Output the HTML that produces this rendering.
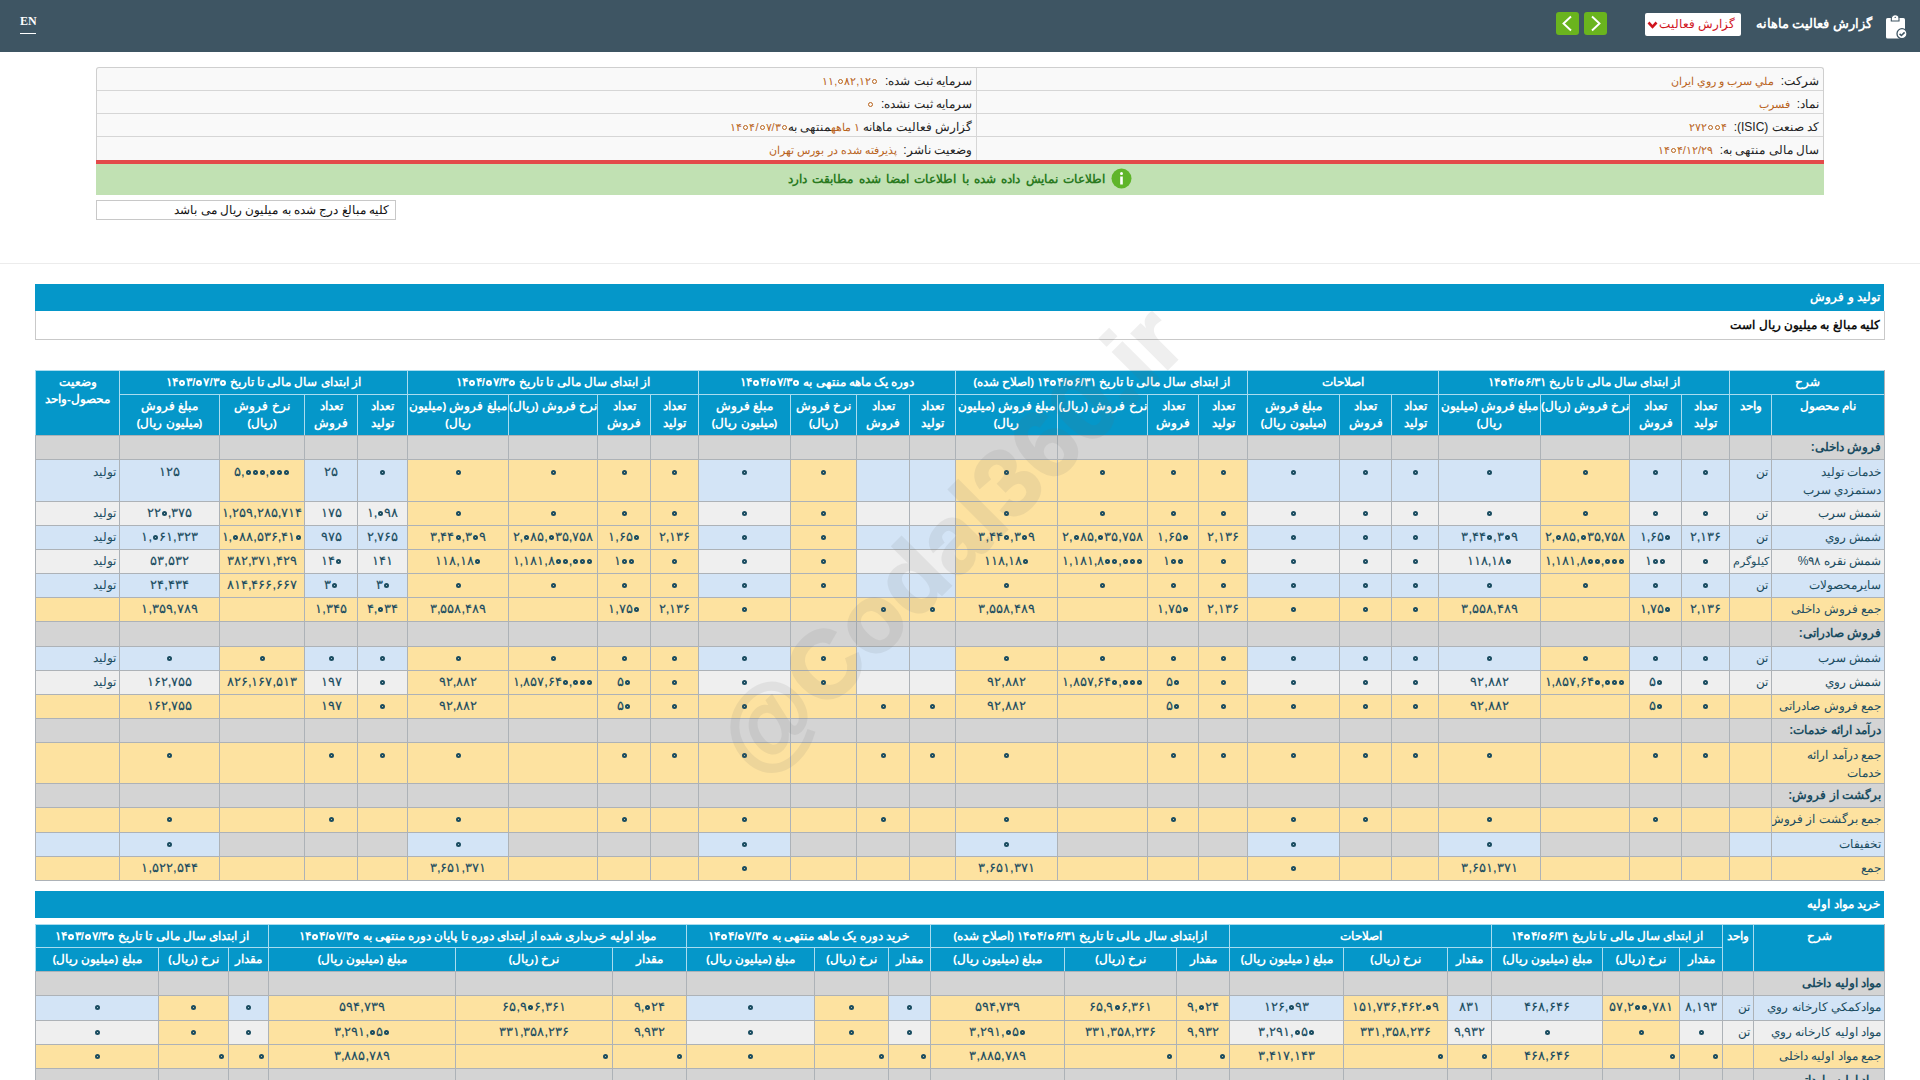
<!DOCTYPE html>
<html lang="fa" dir="rtl">
<head>
<meta charset="utf-8">
<title>گزارش فعالیت ماهانه</title>
<style>
*{box-sizing:border-box;margin:0;padding:0}
html,body{width:1920px;height:1080px;overflow:hidden;background:#fff}
body{position:relative;font-family:"Liberation Sans",sans-serif;color:#222}
.abs{position:absolute}
#top{left:0;top:0;width:1920px;height:52px;background:#3e5563}
#en{left:20px;top:13.5px;font-family:"Liberation Serif",serif;font-size:12px;font-weight:bold;color:#fff;line-height:14px;direction:ltr}
#enu{left:20px;top:33px;width:16px;height:1.3px;background:#fff}
#ttl{right:48px;top:13px;font-size:13px;font-weight:bold;color:#fff;line-height:22px;white-space:nowrap}
#dd{left:1645px;top:13px;width:96px;height:23px;background:#fff;border-radius:2px}
#ddt{right:6px;top:3px;font-size:11.5px;color:#d0141d;line-height:16px;white-space:nowrap}
#gb1,#gb2{top:12px;width:23px;height:23px;background:#6ab41e;border-radius:3px}
#gb1{left:1556px}#gb2{left:1584px}
#info{left:96px;top:67px;width:1728px;height:128px;background:#f9f9f9;border:1px solid #cfcfcf;border-bottom:none;border-radius:3px 3px 0 0;overflow:hidden}
.ir{position:absolute;height:23px;border-bottom:1px solid #d6d6d6;font-size:12px;line-height:22px;white-space:nowrap;padding-top:2px}
.ir .k{color:#222}.ir .v{color:#b8621a;font-size:11px}
#red{left:96px;top:160px;width:1728px;height:4px;background:#e34a4a}
#grn{left:96px;top:164px;width:1728px;height:31px;background:#c1e1b3;text-align:center;font-size:12px;word-spacing:2px;color:#2a7a1f;line-height:30px;font-weight:bold}
#note{left:96px;top:200px;width:300px;height:20px;border:1px solid #c8c8c8;font-size:12px;line-height:18px;padding-right:6px;text-align:right;color:#111}
#sep{left:0;top:263px;width:1920px;height:1px;background:#ececec}
.sec{left:35px;width:1849px;height:27px;background:#0597c9;color:#fff;font-weight:bold;font-size:12px;line-height:27px;padding-right:4px}
#sub{left:35px;top:311px;width:1850px;height:29px;border:1px solid #c9c9c9;border-top:none;font-weight:bold;font-size:12px;line-height:28px;padding-right:4px;color:#111}
.c{position:absolute;border-style:solid;border-width:1px 0 0 1px;font-size:12px;color:#1a4c60;line-height:23px;text-align:center;white-space:nowrap;overflow:hidden}
.h{color:#fff;font-weight:bold;font-size:11.5px;line-height:23px;letter-spacing:-0.15px}
.h2{line-height:17px;padding-top:3px}
.top{}
.b.top{line-height:18px;padding-top:3px}
.cat{font-weight:bold}
.dt{direction:ltr;unicode-bidi:isolate;display:inline-block}
.sm{font-size:11px;overflow:visible;padding-right:2px!important}
.n{font-size:13px;font-weight:normal;-webkit-text-stroke:0.15px #1a4c60;direction:ltr;line-height:22px}
.z{display:inline-block;width:5px;height:5px;border:2px solid currentColor;border-radius:50%;margin:0 1px;vertical-align:1px}
.zh{width:6px;height:6px;border-width:2px;vertical-align:0;margin:0 1px}
.zi{width:5px;height:5px;border-width:1.5px;vertical-align:1px;margin:0 1px}
.name{}
#t1{left:0;top:0}
#t1r{left:35px;top:370px;width:1850px;height:511px;border-right:1px solid #adb2b7;border-bottom:1px solid #adb2b7;pointer-events:none}
#t2r{left:35px;top:924px;width:1850px;height:200px;border-right:1px solid #adb2b7;pointer-events:none}
#wm{left:550px;top:490px;width:800px;text-align:center;font-size:96px;font-weight:bold;color:#6a6a6a;-webkit-text-stroke:2px #6a6a6a;opacity:0.1;transform:rotate(-45deg);direction:ltr;white-space:nowrap;pointer-events:none;line-height:100px}
</style>
</head>
<body>
<div id="top" class="abs"></div>
<div id="en" class="abs">EN</div>
<div id="enu" class="abs"></div>
<svg class="abs" style="left:1882px;top:12px" width="28" height="30" viewBox="0 0 28 30">
  <rect x="4" y="6" width="19" height="20.5" rx="1.6" fill="#fff"/>
  <path d="M9.3 9 L9.3 6.5 A3.85 3.85 0 0 1 17 6.5 L17 9 Z" fill="#fff" stroke="#3e5563" stroke-width="1.1"/>
  <path d="M12.3 6 L13.2 4.6 L14.1 6 Z" fill="#3e5563"/>
  <circle cx="20" cy="21.7" r="5" fill="#fff" stroke="#3e5563" stroke-width="1.3"/>
  <path d="M17.6 21.9 L19.4 23.5 L22.6 20.4" fill="none" stroke="#3e5563" stroke-width="1.6"/>
</svg>
<div id="ttl" class="abs">گزارش فعالیت ماهانه</div>
<div id="dd" class="abs"><div id="ddt" class="abs">گزارش فعالیت</div>
<svg class="abs" style="left:2px;top:8px" width="11" height="8" viewBox="0 0 11 8"><path d="M1.5 1.5 L5.5 5.8 L9.5 1.5" fill="none" stroke="#d0141d" stroke-width="2.6"/></svg></div>
<div id="gb1" class="abs"><svg width="23" height="23" viewBox="0 0 23 23"><path d="M15 4.5 L7.5 11.5 L15 18.5" fill="none" stroke="#fff" stroke-width="1.9"/></svg></div>
<div id="gb2" class="abs"><svg width="23" height="23" viewBox="0 0 23 23"><path d="M8 4.5 L15.5 11.5 L8 18.5" fill="none" stroke="#fff" stroke-width="1.9"/></svg></div>

<div id="info" class="abs">
  <div class="ir" style="right:0;top:0;width:847px;"><span style="position:absolute;right:4px"><span class="k">شرکت:</span>&nbsp; <span class="v">ملي سرب و روي ايران</span></span></div>
  <div class="ir" style="right:0;top:23px;width:847px;"><span style="position:absolute;right:4px"><span class="k">نماد:</span>&nbsp; <span class="v">فسرب</span></span></div>
  <div class="ir" style="right:0;top:46px;width:847px;"><span style="position:absolute;right:4px"><span class="k">کد صنعت (ISIC):</span>&nbsp; <span class="v dt">۲۷۲<i class="z zi"></i><i class="z zi"></i>۴</span></span></div>
  <div class="ir" style="right:0;top:69px;width:847px;border-bottom:none"><span style="position:absolute;right:4px"><span class="k">سال مالی منتهی به:</span>&nbsp; <span class="v dt">۱۴<i class="z zi"></i>۴/۱۲/۲۹</span></span></div>
  <div class="ir" style="left:0;top:0;width:880px;border-right:1px solid #d6d6d6"><span style="position:absolute;right:4px"><span class="k">سرمایه ثبت شده:</span>&nbsp; <span class="v dt">۱۱,<i class="z zi"></i>۸۲,۱۲<i class="z zi"></i></span></span></div>
  <div class="ir" style="left:0;top:23px;width:880px;border-right:1px solid #d6d6d6"><span style="position:absolute;right:4px"><span class="k">سرمایه ثبت نشده:</span>&nbsp; <span class="v dt"><i class="z zi"></i></span></span></div>
  <div class="ir" style="left:0;top:46px;width:880px;border-right:1px solid #d6d6d6"><span style="position:absolute;right:4px"><span class="k">گزارش فعالیت ماهانه</span> <span class="v">۱ ماهه</span><span class="k">منتهی به</span><span class="v dt">۱۴<i class="z zi"></i>۴/<i class="z zi"></i>۷/۳<i class="z zi"></i></span></span></div>
  <div class="ir" style="left:0;top:69px;width:880px;border-right:1px solid #d6d6d6;border-bottom:none"><span style="position:absolute;right:4px"><span class="k">وضعیت ناشر:</span>&nbsp; <span class="v">پذیرفته شده در بورس تهران</span></span></div>
</div>
<div id="red" class="abs"></div>
<div id="grn" class="abs"><svg style="vertical-align:middle;margin-left:6px;position:relative;top:-1px" width="21" height="21" viewBox="0 0 21 21"><circle cx="10.5" cy="10.5" r="10" fill="#5fb52a"/><rect x="9.2" y="8.5" width="2.6" height="8" fill="#fff"/><circle cx="10.5" cy="5.6" r="1.5" fill="#fff"/></svg><span>اطلاعات نمایش داده شده با اطلاعات امضا شده مطابقت دارد</span></div>
<div id="note" class="abs">کلیه مبالغ درج شده به میلیون ریال می باشد</div>
<div id="sep" class="abs"></div>

<div class="sec abs" style="top:284px">تولید و فروش</div>
<div id="sub" class="abs">کلیه مبالغ به میلیون ریال است</div>

<div class="c h" style="left:1729px;top:370px;width:155px;height:24px;background:#0597c9;border-color:#a9dcef;">شرح</div>
<div class="c h" style="left:1438px;top:370px;width:291px;height:24px;background:#0597c9;border-color:#a9dcef;">از ابتدای سال مالی تا تاریخ <span class="dt">۱۴<i class="z zh"></i>۴/<i class="z zh"></i>۶/۳۱</span></div>
<div class="c h" style="left:1247px;top:370px;width:191px;height:24px;background:#0597c9;border-color:#a9dcef;">اصلاحات</div>
<div class="c h" style="left:955px;top:370px;width:292px;height:24px;background:#0597c9;border-color:#a9dcef;">از ابتدای سال مالی تا تاریخ <span class="dt">۱۴<i class="z zh"></i>۴/<i class="z zh"></i>۶/۳۱</span> (اصلاح شده)</div>
<div class="c h" style="left:698px;top:370px;width:257px;height:24px;background:#0597c9;border-color:#a9dcef;">دوره یک ماهه منتهی به <span class="dt">۱۴<i class="z zh"></i>۴/<i class="z zh"></i>۷/۳<i class="z zh"></i></span></div>
<div class="c h" style="left:407px;top:370px;width:291px;height:24px;background:#0597c9;border-color:#a9dcef;">از ابتدای سال مالی تا تاریخ <span class="dt">۱۴<i class="z zh"></i>۴/<i class="z zh"></i>۷/۳<i class="z zh"></i></span></div>
<div class="c h" style="left:119px;top:370px;width:288px;height:24px;background:#0597c9;border-color:#a9dcef;">از ابتدای سال مالی تا تاریخ <span class="dt">۱۴<i class="z zh"></i>۳/<i class="z zh"></i>۷/۳<i class="z zh"></i></span></div>
<div class="c h h2 top" style="left:35px;top:370px;width:84px;height:65px;background:#0597c9;border-color:#a9dcef;">وضعیت<br>محصول-واحد</div>
<div class="c h h2 top" style="left:1771px;top:394px;width:113px;height:41px;background:#0597c9;border-color:#a9dcef;">نام محصول</div>
<div class="c h h2 top" style="left:1729px;top:394px;width:42px;height:41px;background:#0597c9;border-color:#a9dcef;">واحد</div>
<div class="c h h2 top" style="left:1681px;top:394px;width:48px;height:41px;background:#0597c9;border-color:#a9dcef;">تعداد<br>تولید</div>
<div class="c h h2 top" style="left:1629px;top:394px;width:52px;height:41px;background:#0597c9;border-color:#a9dcef;">تعداد<br>فروش</div>
<div class="c h h2 top" style="left:1540px;top:394px;width:89px;height:41px;background:#0597c9;border-color:#a9dcef;">نرخ فروش (ریال)</div>
<div class="c h h2 top" style="left:1438px;top:394px;width:102px;height:41px;background:#0597c9;border-color:#a9dcef;">مبلغ فروش (میلیون<br>ریال)</div>
<div class="c h h2 top" style="left:1391px;top:394px;width:47px;height:41px;background:#0597c9;border-color:#a9dcef;">تعداد<br>تولید</div>
<div class="c h h2 top" style="left:1339px;top:394px;width:52px;height:41px;background:#0597c9;border-color:#a9dcef;">تعداد<br>فروش</div>
<div class="c h h2 top" style="left:1247px;top:394px;width:92px;height:41px;background:#0597c9;border-color:#a9dcef;">مبلغ فروش<br>(میلیون ریال)</div>
<div class="c h h2 top" style="left:1198px;top:394px;width:49px;height:41px;background:#0597c9;border-color:#a9dcef;">تعداد<br>تولید</div>
<div class="c h h2 top" style="left:1147px;top:394px;width:51px;height:41px;background:#0597c9;border-color:#a9dcef;">تعداد<br>فروش</div>
<div class="c h h2 top" style="left:1057px;top:394px;width:90px;height:41px;background:#0597c9;border-color:#a9dcef;">نرخ فروش (ریال)</div>
<div class="c h h2 top" style="left:955px;top:394px;width:102px;height:41px;background:#0597c9;border-color:#a9dcef;">مبلغ فروش (میلیون<br>ریال)</div>
<div class="c h h2 top" style="left:909px;top:394px;width:46px;height:41px;background:#0597c9;border-color:#a9dcef;">تعداد<br>تولید</div>
<div class="c h h2 top" style="left:856px;top:394px;width:53px;height:41px;background:#0597c9;border-color:#a9dcef;">تعداد<br>فروش</div>
<div class="c h h2 top" style="left:790px;top:394px;width:66px;height:41px;background:#0597c9;border-color:#a9dcef;">نرخ فروش<br>(ریال)</div>
<div class="c h h2 top" style="left:698px;top:394px;width:92px;height:41px;background:#0597c9;border-color:#a9dcef;">مبلغ فروش<br>(میلیون ریال)</div>
<div class="c h h2 top" style="left:650px;top:394px;width:48px;height:41px;background:#0597c9;border-color:#a9dcef;">تعداد<br>تولید</div>
<div class="c h h2 top" style="left:597px;top:394px;width:53px;height:41px;background:#0597c9;border-color:#a9dcef;">تعداد<br>فروش</div>
<div class="c h h2 top" style="left:508px;top:394px;width:89px;height:41px;background:#0597c9;border-color:#a9dcef;">نرخ فروش (ریال)</div>
<div class="c h h2 top" style="left:407px;top:394px;width:101px;height:41px;background:#0597c9;border-color:#a9dcef;">مبلغ فروش (میلیون<br>ریال)</div>
<div class="c h h2 top" style="left:357px;top:394px;width:50px;height:41px;background:#0597c9;border-color:#a9dcef;">تعداد<br>تولید</div>
<div class="c h h2 top" style="left:304px;top:394px;width:53px;height:41px;background:#0597c9;border-color:#a9dcef;">تعداد<br>فروش</div>
<div class="c h h2 top" style="left:219px;top:394px;width:85px;height:41px;background:#0597c9;border-color:#a9dcef;">نرخ فروش<br>(ریال)</div>
<div class="c h h2 top" style="left:119px;top:394px;width:100px;height:41px;background:#0597c9;border-color:#a9dcef;">مبلغ فروش<br>(میلیون ریال)</div>
<div class="c b cat" style="left:1771px;top:435px;width:113px;height:24px;background:#d4d4d4;border-color:#adb2b7;text-align:right;padding-right:3px;">فروش داخلی:</div>
<div class="c b cat" style="left:1729px;top:435px;width:42px;height:24px;background:#d4d4d4;border-color:#adb2b7;text-align:right;padding-right:3px;"></div>
<div class="c b cat" style="left:1681px;top:435px;width:48px;height:24px;background:#d4d4d4;border-color:#adb2b7;text-align:right;padding-right:3px;"></div>
<div class="c b cat" style="left:1629px;top:435px;width:52px;height:24px;background:#d4d4d4;border-color:#adb2b7;text-align:right;padding-right:3px;"></div>
<div class="c b cat" style="left:1540px;top:435px;width:89px;height:24px;background:#d4d4d4;border-color:#adb2b7;text-align:right;padding-right:3px;"></div>
<div class="c b cat" style="left:1438px;top:435px;width:102px;height:24px;background:#d4d4d4;border-color:#adb2b7;text-align:right;padding-right:3px;"></div>
<div class="c b cat" style="left:1391px;top:435px;width:47px;height:24px;background:#d4d4d4;border-color:#adb2b7;text-align:right;padding-right:3px;"></div>
<div class="c b cat" style="left:1339px;top:435px;width:52px;height:24px;background:#d4d4d4;border-color:#adb2b7;text-align:right;padding-right:3px;"></div>
<div class="c b cat" style="left:1247px;top:435px;width:92px;height:24px;background:#d4d4d4;border-color:#adb2b7;text-align:right;padding-right:3px;"></div>
<div class="c b cat" style="left:1198px;top:435px;width:49px;height:24px;background:#d4d4d4;border-color:#adb2b7;text-align:right;padding-right:3px;"></div>
<div class="c b cat" style="left:1147px;top:435px;width:51px;height:24px;background:#d4d4d4;border-color:#adb2b7;text-align:right;padding-right:3px;"></div>
<div class="c b cat" style="left:1057px;top:435px;width:90px;height:24px;background:#d4d4d4;border-color:#adb2b7;text-align:right;padding-right:3px;"></div>
<div class="c b cat" style="left:955px;top:435px;width:102px;height:24px;background:#d4d4d4;border-color:#adb2b7;text-align:right;padding-right:3px;"></div>
<div class="c b cat" style="left:909px;top:435px;width:46px;height:24px;background:#d4d4d4;border-color:#adb2b7;text-align:right;padding-right:3px;"></div>
<div class="c b cat" style="left:856px;top:435px;width:53px;height:24px;background:#d4d4d4;border-color:#adb2b7;text-align:right;padding-right:3px;"></div>
<div class="c b cat" style="left:790px;top:435px;width:66px;height:24px;background:#d4d4d4;border-color:#adb2b7;text-align:right;padding-right:3px;"></div>
<div class="c b cat" style="left:698px;top:435px;width:92px;height:24px;background:#d4d4d4;border-color:#adb2b7;text-align:right;padding-right:3px;"></div>
<div class="c b cat" style="left:650px;top:435px;width:48px;height:24px;background:#d4d4d4;border-color:#adb2b7;text-align:right;padding-right:3px;"></div>
<div class="c b cat" style="left:597px;top:435px;width:53px;height:24px;background:#d4d4d4;border-color:#adb2b7;text-align:right;padding-right:3px;"></div>
<div class="c b cat" style="left:508px;top:435px;width:89px;height:24px;background:#d4d4d4;border-color:#adb2b7;text-align:right;padding-right:3px;"></div>
<div class="c b cat" style="left:407px;top:435px;width:101px;height:24px;background:#d4d4d4;border-color:#adb2b7;text-align:right;padding-right:3px;"></div>
<div class="c b cat" style="left:357px;top:435px;width:50px;height:24px;background:#d4d4d4;border-color:#adb2b7;text-align:right;padding-right:3px;"></div>
<div class="c b cat" style="left:304px;top:435px;width:53px;height:24px;background:#d4d4d4;border-color:#adb2b7;text-align:right;padding-right:3px;"></div>
<div class="c b cat" style="left:219px;top:435px;width:85px;height:24px;background:#d4d4d4;border-color:#adb2b7;text-align:right;padding-right:3px;"></div>
<div class="c b cat" style="left:119px;top:435px;width:100px;height:24px;background:#d4d4d4;border-color:#adb2b7;text-align:right;padding-right:3px;"></div>
<div class="c b cat" style="left:35px;top:435px;width:84px;height:24px;background:#d4d4d4;border-color:#adb2b7;text-align:right;padding-right:3px;"></div>
<div class="c b name top" style="left:1771px;top:459px;width:113px;height:42px;background:#d3e4f6;border-color:#adb2b7;text-align:right;padding-right:3px;">خدمات تولید<br>دستمزدي سرب</div>
<div class="c b top" style="left:1729px;top:459px;width:42px;height:42px;background:#d3e4f6;border-color:#adb2b7;text-align:right;padding-right:3px;">تن</div>
<div class="c b n top" style="left:1681px;top:459px;width:48px;height:42px;background:#d3e4f6;border-color:#adb2b7;"><i class="z"></i></div>
<div class="c b n top" style="left:1629px;top:459px;width:52px;height:42px;background:#d3e4f6;border-color:#adb2b7;"><i class="z"></i></div>
<div class="c b n top" style="left:1540px;top:459px;width:89px;height:42px;background:#fde2a0;border-color:#adb2b7;"><i class="z"></i></div>
<div class="c b n top" style="left:1438px;top:459px;width:102px;height:42px;background:#d3e4f6;border-color:#adb2b7;"><i class="z"></i></div>
<div class="c b n top" style="left:1391px;top:459px;width:47px;height:42px;background:#d3e4f6;border-color:#adb2b7;"><i class="z"></i></div>
<div class="c b n top" style="left:1339px;top:459px;width:52px;height:42px;background:#d3e4f6;border-color:#adb2b7;"><i class="z"></i></div>
<div class="c b n top" style="left:1247px;top:459px;width:92px;height:42px;background:#d3e4f6;border-color:#adb2b7;"><i class="z"></i></div>
<div class="c b n top" style="left:1198px;top:459px;width:49px;height:42px;background:#fde2a0;border-color:#adb2b7;"><i class="z"></i></div>
<div class="c b n top" style="left:1147px;top:459px;width:51px;height:42px;background:#fde2a0;border-color:#adb2b7;"><i class="z"></i></div>
<div class="c b n top" style="left:1057px;top:459px;width:90px;height:42px;background:#fde2a0;border-color:#adb2b7;"><i class="z"></i></div>
<div class="c b n top" style="left:955px;top:459px;width:102px;height:42px;background:#fde2a0;border-color:#adb2b7;"><i class="z"></i></div>
<div class="c b n top" style="left:909px;top:459px;width:46px;height:42px;background:#d3e4f6;border-color:#adb2b7;"></div>
<div class="c b n top" style="left:856px;top:459px;width:53px;height:42px;background:#d3e4f6;border-color:#adb2b7;"></div>
<div class="c b n top" style="left:790px;top:459px;width:66px;height:42px;background:#fde2a0;border-color:#adb2b7;"><i class="z"></i></div>
<div class="c b n top" style="left:698px;top:459px;width:92px;height:42px;background:#d3e4f6;border-color:#adb2b7;"><i class="z"></i></div>
<div class="c b n top" style="left:650px;top:459px;width:48px;height:42px;background:#fde2a0;border-color:#adb2b7;"><i class="z"></i></div>
<div class="c b n top" style="left:597px;top:459px;width:53px;height:42px;background:#fde2a0;border-color:#adb2b7;"><i class="z"></i></div>
<div class="c b n top" style="left:508px;top:459px;width:89px;height:42px;background:#fde2a0;border-color:#adb2b7;"><i class="z"></i></div>
<div class="c b n top" style="left:407px;top:459px;width:101px;height:42px;background:#fde2a0;border-color:#adb2b7;"><i class="z"></i></div>
<div class="c b n top" style="left:357px;top:459px;width:50px;height:42px;background:#d3e4f6;border-color:#adb2b7;"><i class="z"></i></div>
<div class="c b n top" style="left:304px;top:459px;width:53px;height:42px;background:#d3e4f6;border-color:#adb2b7;">۲۵</div>
<div class="c b n top" style="left:219px;top:459px;width:85px;height:42px;background:#fde2a0;border-color:#adb2b7;">۵,<i class="z"></i><i class="z"></i><i class="z"></i>,<i class="z"></i><i class="z"></i><i class="z"></i></div>
<div class="c b n top" style="left:119px;top:459px;width:100px;height:42px;background:#d3e4f6;border-color:#adb2b7;">۱۲۵</div>
<div class="c b top" style="left:35px;top:459px;width:84px;height:42px;background:#d3e4f6;border-color:#adb2b7;text-align:right;padding-right:3px;">تولید</div>
<div class="c b name" style="left:1771px;top:501px;width:113px;height:24px;background:#efefef;border-color:#adb2b7;text-align:right;padding-right:3px;">شمش سرب</div>
<div class="c b" style="left:1729px;top:501px;width:42px;height:24px;background:#efefef;border-color:#adb2b7;text-align:right;padding-right:3px;">تن</div>
<div class="c b n" style="left:1681px;top:501px;width:48px;height:24px;background:#efefef;border-color:#adb2b7;"><i class="z"></i></div>
<div class="c b n" style="left:1629px;top:501px;width:52px;height:24px;background:#efefef;border-color:#adb2b7;"><i class="z"></i></div>
<div class="c b n" style="left:1540px;top:501px;width:89px;height:24px;background:#fde2a0;border-color:#adb2b7;"><i class="z"></i></div>
<div class="c b n" style="left:1438px;top:501px;width:102px;height:24px;background:#efefef;border-color:#adb2b7;"><i class="z"></i></div>
<div class="c b n" style="left:1391px;top:501px;width:47px;height:24px;background:#efefef;border-color:#adb2b7;"><i class="z"></i></div>
<div class="c b n" style="left:1339px;top:501px;width:52px;height:24px;background:#efefef;border-color:#adb2b7;"><i class="z"></i></div>
<div class="c b n" style="left:1247px;top:501px;width:92px;height:24px;background:#efefef;border-color:#adb2b7;"><i class="z"></i></div>
<div class="c b n" style="left:1198px;top:501px;width:49px;height:24px;background:#fde2a0;border-color:#adb2b7;"><i class="z"></i></div>
<div class="c b n" style="left:1147px;top:501px;width:51px;height:24px;background:#fde2a0;border-color:#adb2b7;"><i class="z"></i></div>
<div class="c b n" style="left:1057px;top:501px;width:90px;height:24px;background:#fde2a0;border-color:#adb2b7;"><i class="z"></i></div>
<div class="c b n" style="left:955px;top:501px;width:102px;height:24px;background:#fde2a0;border-color:#adb2b7;"><i class="z"></i></div>
<div class="c b n" style="left:909px;top:501px;width:46px;height:24px;background:#efefef;border-color:#adb2b7;"></div>
<div class="c b n" style="left:856px;top:501px;width:53px;height:24px;background:#efefef;border-color:#adb2b7;"></div>
<div class="c b n" style="left:790px;top:501px;width:66px;height:24px;background:#fde2a0;border-color:#adb2b7;"><i class="z"></i></div>
<div class="c b n" style="left:698px;top:501px;width:92px;height:24px;background:#efefef;border-color:#adb2b7;"><i class="z"></i></div>
<div class="c b n" style="left:650px;top:501px;width:48px;height:24px;background:#fde2a0;border-color:#adb2b7;"><i class="z"></i></div>
<div class="c b n" style="left:597px;top:501px;width:53px;height:24px;background:#fde2a0;border-color:#adb2b7;"><i class="z"></i></div>
<div class="c b n" style="left:508px;top:501px;width:89px;height:24px;background:#fde2a0;border-color:#adb2b7;"><i class="z"></i></div>
<div class="c b n" style="left:407px;top:501px;width:101px;height:24px;background:#fde2a0;border-color:#adb2b7;"><i class="z"></i></div>
<div class="c b n" style="left:357px;top:501px;width:50px;height:24px;background:#efefef;border-color:#adb2b7;">۱,<i class="z"></i>۹۸</div>
<div class="c b n" style="left:304px;top:501px;width:53px;height:24px;background:#efefef;border-color:#adb2b7;">۱۷۵</div>
<div class="c b n" style="left:219px;top:501px;width:85px;height:24px;background:#fde2a0;border-color:#adb2b7;">۱,۲۵۹,۲۸۵,۷۱۴</div>
<div class="c b n" style="left:119px;top:501px;width:100px;height:24px;background:#efefef;border-color:#adb2b7;">۲۲<i class="z"></i>,۳۷۵</div>
<div class="c b" style="left:35px;top:501px;width:84px;height:24px;background:#efefef;border-color:#adb2b7;text-align:right;padding-right:3px;">تولید</div>
<div class="c b name" style="left:1771px;top:525px;width:113px;height:24px;background:#d3e4f6;border-color:#adb2b7;text-align:right;padding-right:3px;">شمش روي</div>
<div class="c b" style="left:1729px;top:525px;width:42px;height:24px;background:#d3e4f6;border-color:#adb2b7;text-align:right;padding-right:3px;">تن</div>
<div class="c b n" style="left:1681px;top:525px;width:48px;height:24px;background:#d3e4f6;border-color:#adb2b7;">۲,۱۳۶</div>
<div class="c b n" style="left:1629px;top:525px;width:52px;height:24px;background:#d3e4f6;border-color:#adb2b7;">۱,۶۵<i class="z"></i></div>
<div class="c b n" style="left:1540px;top:525px;width:89px;height:24px;background:#fde2a0;border-color:#adb2b7;">۲,<i class="z"></i>۸۵,<i class="z"></i>۳۵,۷۵۸</div>
<div class="c b n" style="left:1438px;top:525px;width:102px;height:24px;background:#d3e4f6;border-color:#adb2b7;">۳,۴۴<i class="z"></i>,۳<i class="z"></i>۹</div>
<div class="c b n" style="left:1391px;top:525px;width:47px;height:24px;background:#d3e4f6;border-color:#adb2b7;"><i class="z"></i></div>
<div class="c b n" style="left:1339px;top:525px;width:52px;height:24px;background:#d3e4f6;border-color:#adb2b7;"><i class="z"></i></div>
<div class="c b n" style="left:1247px;top:525px;width:92px;height:24px;background:#d3e4f6;border-color:#adb2b7;"><i class="z"></i></div>
<div class="c b n" style="left:1198px;top:525px;width:49px;height:24px;background:#fde2a0;border-color:#adb2b7;">۲,۱۳۶</div>
<div class="c b n" style="left:1147px;top:525px;width:51px;height:24px;background:#fde2a0;border-color:#adb2b7;">۱,۶۵<i class="z"></i></div>
<div class="c b n" style="left:1057px;top:525px;width:90px;height:24px;background:#fde2a0;border-color:#adb2b7;">۲,<i class="z"></i>۸۵,<i class="z"></i>۳۵,۷۵۸</div>
<div class="c b n" style="left:955px;top:525px;width:102px;height:24px;background:#fde2a0;border-color:#adb2b7;">۳,۴۴<i class="z"></i>,۳<i class="z"></i>۹</div>
<div class="c b n" style="left:909px;top:525px;width:46px;height:24px;background:#d3e4f6;border-color:#adb2b7;"></div>
<div class="c b n" style="left:856px;top:525px;width:53px;height:24px;background:#d3e4f6;border-color:#adb2b7;"></div>
<div class="c b n" style="left:790px;top:525px;width:66px;height:24px;background:#fde2a0;border-color:#adb2b7;"><i class="z"></i></div>
<div class="c b n" style="left:698px;top:525px;width:92px;height:24px;background:#d3e4f6;border-color:#adb2b7;"><i class="z"></i></div>
<div class="c b n" style="left:650px;top:525px;width:48px;height:24px;background:#fde2a0;border-color:#adb2b7;">۲,۱۳۶</div>
<div class="c b n" style="left:597px;top:525px;width:53px;height:24px;background:#fde2a0;border-color:#adb2b7;">۱,۶۵<i class="z"></i></div>
<div class="c b n" style="left:508px;top:525px;width:89px;height:24px;background:#fde2a0;border-color:#adb2b7;">۲,<i class="z"></i>۸۵,<i class="z"></i>۳۵,۷۵۸</div>
<div class="c b n" style="left:407px;top:525px;width:101px;height:24px;background:#fde2a0;border-color:#adb2b7;">۳,۴۴<i class="z"></i>,۳<i class="z"></i>۹</div>
<div class="c b n" style="left:357px;top:525px;width:50px;height:24px;background:#d3e4f6;border-color:#adb2b7;">۲,۷۶۵</div>
<div class="c b n" style="left:304px;top:525px;width:53px;height:24px;background:#d3e4f6;border-color:#adb2b7;">۹۷۵</div>
<div class="c b n" style="left:219px;top:525px;width:85px;height:24px;background:#fde2a0;border-color:#adb2b7;">۱,<i class="z"></i>۸۸,۵۳۶,۴۱<i class="z"></i></div>
<div class="c b n" style="left:119px;top:525px;width:100px;height:24px;background:#d3e4f6;border-color:#adb2b7;">۱,<i class="z"></i>۶۱,۳۲۳</div>
<div class="c b" style="left:35px;top:525px;width:84px;height:24px;background:#d3e4f6;border-color:#adb2b7;text-align:right;padding-right:3px;">تولید</div>
<div class="c b name" style="left:1771px;top:549px;width:113px;height:24px;background:#efefef;border-color:#adb2b7;text-align:right;padding-right:3px;">شمش نقره ۹۸%</div>
<div class="c b sm" style="left:1729px;top:549px;width:42px;height:24px;background:#efefef;border-color:#adb2b7;text-align:right;padding-right:3px;">کیلوگرم</div>
<div class="c b n" style="left:1681px;top:549px;width:48px;height:24px;background:#efefef;border-color:#adb2b7;"><i class="z"></i></div>
<div class="c b n" style="left:1629px;top:549px;width:52px;height:24px;background:#efefef;border-color:#adb2b7;">۱<i class="z"></i><i class="z"></i></div>
<div class="c b n" style="left:1540px;top:549px;width:89px;height:24px;background:#fde2a0;border-color:#adb2b7;">۱,۱۸۱,۸<i class="z"></i><i class="z"></i>,<i class="z"></i><i class="z"></i><i class="z"></i></div>
<div class="c b n" style="left:1438px;top:549px;width:102px;height:24px;background:#efefef;border-color:#adb2b7;">۱۱۸,۱۸<i class="z"></i></div>
<div class="c b n" style="left:1391px;top:549px;width:47px;height:24px;background:#efefef;border-color:#adb2b7;"><i class="z"></i></div>
<div class="c b n" style="left:1339px;top:549px;width:52px;height:24px;background:#efefef;border-color:#adb2b7;"><i class="z"></i></div>
<div class="c b n" style="left:1247px;top:549px;width:92px;height:24px;background:#efefef;border-color:#adb2b7;"><i class="z"></i></div>
<div class="c b n" style="left:1198px;top:549px;width:49px;height:24px;background:#fde2a0;border-color:#adb2b7;"><i class="z"></i></div>
<div class="c b n" style="left:1147px;top:549px;width:51px;height:24px;background:#fde2a0;border-color:#adb2b7;">۱<i class="z"></i><i class="z"></i></div>
<div class="c b n" style="left:1057px;top:549px;width:90px;height:24px;background:#fde2a0;border-color:#adb2b7;">۱,۱۸۱,۸<i class="z"></i><i class="z"></i>,<i class="z"></i><i class="z"></i><i class="z"></i></div>
<div class="c b n" style="left:955px;top:549px;width:102px;height:24px;background:#fde2a0;border-color:#adb2b7;">۱۱۸,۱۸<i class="z"></i></div>
<div class="c b n" style="left:909px;top:549px;width:46px;height:24px;background:#efefef;border-color:#adb2b7;"></div>
<div class="c b n" style="left:856px;top:549px;width:53px;height:24px;background:#efefef;border-color:#adb2b7;"></div>
<div class="c b n" style="left:790px;top:549px;width:66px;height:24px;background:#fde2a0;border-color:#adb2b7;"><i class="z"></i></div>
<div class="c b n" style="left:698px;top:549px;width:92px;height:24px;background:#efefef;border-color:#adb2b7;"><i class="z"></i></div>
<div class="c b n" style="left:650px;top:549px;width:48px;height:24px;background:#fde2a0;border-color:#adb2b7;"><i class="z"></i></div>
<div class="c b n" style="left:597px;top:549px;width:53px;height:24px;background:#fde2a0;border-color:#adb2b7;">۱<i class="z"></i><i class="z"></i></div>
<div class="c b n" style="left:508px;top:549px;width:89px;height:24px;background:#fde2a0;border-color:#adb2b7;">۱,۱۸۱,۸<i class="z"></i><i class="z"></i>,<i class="z"></i><i class="z"></i><i class="z"></i></div>
<div class="c b n" style="left:407px;top:549px;width:101px;height:24px;background:#fde2a0;border-color:#adb2b7;">۱۱۸,۱۸<i class="z"></i></div>
<div class="c b n" style="left:357px;top:549px;width:50px;height:24px;background:#efefef;border-color:#adb2b7;">۱۴۱</div>
<div class="c b n" style="left:304px;top:549px;width:53px;height:24px;background:#efefef;border-color:#adb2b7;">۱۴<i class="z"></i></div>
<div class="c b n" style="left:219px;top:549px;width:85px;height:24px;background:#fde2a0;border-color:#adb2b7;">۳۸۲,۳۷۱,۴۲۹</div>
<div class="c b n" style="left:119px;top:549px;width:100px;height:24px;background:#efefef;border-color:#adb2b7;">۵۳,۵۳۲</div>
<div class="c b" style="left:35px;top:549px;width:84px;height:24px;background:#efefef;border-color:#adb2b7;text-align:right;padding-right:3px;">تولید</div>
<div class="c b name" style="left:1771px;top:573px;width:113px;height:24px;background:#d3e4f6;border-color:#adb2b7;text-align:right;padding-right:3px;">سایرمحصولات</div>
<div class="c b" style="left:1729px;top:573px;width:42px;height:24px;background:#d3e4f6;border-color:#adb2b7;text-align:right;padding-right:3px;">تن</div>
<div class="c b n" style="left:1681px;top:573px;width:48px;height:24px;background:#d3e4f6;border-color:#adb2b7;"><i class="z"></i></div>
<div class="c b n" style="left:1629px;top:573px;width:52px;height:24px;background:#d3e4f6;border-color:#adb2b7;"><i class="z"></i></div>
<div class="c b n" style="left:1540px;top:573px;width:89px;height:24px;background:#fde2a0;border-color:#adb2b7;"><i class="z"></i></div>
<div class="c b n" style="left:1438px;top:573px;width:102px;height:24px;background:#d3e4f6;border-color:#adb2b7;"><i class="z"></i></div>
<div class="c b n" style="left:1391px;top:573px;width:47px;height:24px;background:#d3e4f6;border-color:#adb2b7;"><i class="z"></i></div>
<div class="c b n" style="left:1339px;top:573px;width:52px;height:24px;background:#d3e4f6;border-color:#adb2b7;"><i class="z"></i></div>
<div class="c b n" style="left:1247px;top:573px;width:92px;height:24px;background:#d3e4f6;border-color:#adb2b7;"><i class="z"></i></div>
<div class="c b n" style="left:1198px;top:573px;width:49px;height:24px;background:#fde2a0;border-color:#adb2b7;"><i class="z"></i></div>
<div class="c b n" style="left:1147px;top:573px;width:51px;height:24px;background:#fde2a0;border-color:#adb2b7;"><i class="z"></i></div>
<div class="c b n" style="left:1057px;top:573px;width:90px;height:24px;background:#fde2a0;border-color:#adb2b7;"><i class="z"></i></div>
<div class="c b n" style="left:955px;top:573px;width:102px;height:24px;background:#fde2a0;border-color:#adb2b7;"><i class="z"></i></div>
<div class="c b n" style="left:909px;top:573px;width:46px;height:24px;background:#d3e4f6;border-color:#adb2b7;"></div>
<div class="c b n" style="left:856px;top:573px;width:53px;height:24px;background:#d3e4f6;border-color:#adb2b7;"></div>
<div class="c b n" style="left:790px;top:573px;width:66px;height:24px;background:#fde2a0;border-color:#adb2b7;"><i class="z"></i></div>
<div class="c b n" style="left:698px;top:573px;width:92px;height:24px;background:#d3e4f6;border-color:#adb2b7;"><i class="z"></i></div>
<div class="c b n" style="left:650px;top:573px;width:48px;height:24px;background:#fde2a0;border-color:#adb2b7;"><i class="z"></i></div>
<div class="c b n" style="left:597px;top:573px;width:53px;height:24px;background:#fde2a0;border-color:#adb2b7;"><i class="z"></i></div>
<div class="c b n" style="left:508px;top:573px;width:89px;height:24px;background:#fde2a0;border-color:#adb2b7;"><i class="z"></i></div>
<div class="c b n" style="left:407px;top:573px;width:101px;height:24px;background:#fde2a0;border-color:#adb2b7;"><i class="z"></i></div>
<div class="c b n" style="left:357px;top:573px;width:50px;height:24px;background:#d3e4f6;border-color:#adb2b7;">۳<i class="z"></i></div>
<div class="c b n" style="left:304px;top:573px;width:53px;height:24px;background:#d3e4f6;border-color:#adb2b7;">۳<i class="z"></i></div>
<div class="c b n" style="left:219px;top:573px;width:85px;height:24px;background:#fde2a0;border-color:#adb2b7;">۸۱۴,۴۶۶,۶۶۷</div>
<div class="c b n" style="left:119px;top:573px;width:100px;height:24px;background:#d3e4f6;border-color:#adb2b7;">۲۴,۴۳۴</div>
<div class="c b" style="left:35px;top:573px;width:84px;height:24px;background:#d3e4f6;border-color:#adb2b7;text-align:right;padding-right:3px;">تولید</div>
<div class="c b name" style="left:1771px;top:597px;width:113px;height:24px;background:#fde2a0;border-color:#adb2b7;text-align:right;padding-right:3px;">جمع فروش داخلی</div>
<div class="c b" style="left:1729px;top:597px;width:42px;height:24px;background:#fde2a0;border-color:#adb2b7;"></div>
<div class="c b n" style="left:1681px;top:597px;width:48px;height:24px;background:#fde2a0;border-color:#adb2b7;">۲,۱۳۶</div>
<div class="c b n" style="left:1629px;top:597px;width:52px;height:24px;background:#fde2a0;border-color:#adb2b7;">۱,۷۵<i class="z"></i></div>
<div class="c b n" style="left:1540px;top:597px;width:89px;height:24px;background:#fde2a0;border-color:#adb2b7;"></div>
<div class="c b n" style="left:1438px;top:597px;width:102px;height:24px;background:#fde2a0;border-color:#adb2b7;">۳,۵۵۸,۴۸۹</div>
<div class="c b n" style="left:1391px;top:597px;width:47px;height:24px;background:#fde2a0;border-color:#adb2b7;"><i class="z"></i></div>
<div class="c b n" style="left:1339px;top:597px;width:52px;height:24px;background:#fde2a0;border-color:#adb2b7;"><i class="z"></i></div>
<div class="c b n" style="left:1247px;top:597px;width:92px;height:24px;background:#fde2a0;border-color:#adb2b7;"><i class="z"></i></div>
<div class="c b n" style="left:1198px;top:597px;width:49px;height:24px;background:#fde2a0;border-color:#adb2b7;">۲,۱۳۶</div>
<div class="c b n" style="left:1147px;top:597px;width:51px;height:24px;background:#fde2a0;border-color:#adb2b7;">۱,۷۵<i class="z"></i></div>
<div class="c b n" style="left:1057px;top:597px;width:90px;height:24px;background:#fde2a0;border-color:#adb2b7;"></div>
<div class="c b n" style="left:955px;top:597px;width:102px;height:24px;background:#fde2a0;border-color:#adb2b7;">۳,۵۵۸,۴۸۹</div>
<div class="c b n" style="left:909px;top:597px;width:46px;height:24px;background:#fde2a0;border-color:#adb2b7;"><i class="z"></i></div>
<div class="c b n" style="left:856px;top:597px;width:53px;height:24px;background:#fde2a0;border-color:#adb2b7;"><i class="z"></i></div>
<div class="c b n" style="left:790px;top:597px;width:66px;height:24px;background:#fde2a0;border-color:#adb2b7;"></div>
<div class="c b n" style="left:698px;top:597px;width:92px;height:24px;background:#fde2a0;border-color:#adb2b7;"><i class="z"></i></div>
<div class="c b n" style="left:650px;top:597px;width:48px;height:24px;background:#fde2a0;border-color:#adb2b7;">۲,۱۳۶</div>
<div class="c b n" style="left:597px;top:597px;width:53px;height:24px;background:#fde2a0;border-color:#adb2b7;">۱,۷۵<i class="z"></i></div>
<div class="c b n" style="left:508px;top:597px;width:89px;height:24px;background:#fde2a0;border-color:#adb2b7;"></div>
<div class="c b n" style="left:407px;top:597px;width:101px;height:24px;background:#fde2a0;border-color:#adb2b7;">۳,۵۵۸,۴۸۹</div>
<div class="c b n" style="left:357px;top:597px;width:50px;height:24px;background:#fde2a0;border-color:#adb2b7;">۴,<i class="z"></i>۳۴</div>
<div class="c b n" style="left:304px;top:597px;width:53px;height:24px;background:#fde2a0;border-color:#adb2b7;">۱,۳۴۵</div>
<div class="c b n" style="left:219px;top:597px;width:85px;height:24px;background:#fde2a0;border-color:#adb2b7;"></div>
<div class="c b n" style="left:119px;top:597px;width:100px;height:24px;background:#fde2a0;border-color:#adb2b7;">۱,۳۵۹,۷۸۹</div>
<div class="c b n" style="left:35px;top:597px;width:84px;height:24px;background:#fde2a0;border-color:#adb2b7;"></div>
<div class="c b cat" style="left:1771px;top:621px;width:113px;height:25px;background:#d4d4d4;border-color:#adb2b7;text-align:right;padding-right:3px;">فروش صادراتی:</div>
<div class="c b cat" style="left:1729px;top:621px;width:42px;height:25px;background:#d4d4d4;border-color:#adb2b7;text-align:right;padding-right:3px;"></div>
<div class="c b cat" style="left:1681px;top:621px;width:48px;height:25px;background:#d4d4d4;border-color:#adb2b7;text-align:right;padding-right:3px;"></div>
<div class="c b cat" style="left:1629px;top:621px;width:52px;height:25px;background:#d4d4d4;border-color:#adb2b7;text-align:right;padding-right:3px;"></div>
<div class="c b cat" style="left:1540px;top:621px;width:89px;height:25px;background:#d4d4d4;border-color:#adb2b7;text-align:right;padding-right:3px;"></div>
<div class="c b cat" style="left:1438px;top:621px;width:102px;height:25px;background:#d4d4d4;border-color:#adb2b7;text-align:right;padding-right:3px;"></div>
<div class="c b cat" style="left:1391px;top:621px;width:47px;height:25px;background:#d4d4d4;border-color:#adb2b7;text-align:right;padding-right:3px;"></div>
<div class="c b cat" style="left:1339px;top:621px;width:52px;height:25px;background:#d4d4d4;border-color:#adb2b7;text-align:right;padding-right:3px;"></div>
<div class="c b cat" style="left:1247px;top:621px;width:92px;height:25px;background:#d4d4d4;border-color:#adb2b7;text-align:right;padding-right:3px;"></div>
<div class="c b cat" style="left:1198px;top:621px;width:49px;height:25px;background:#d4d4d4;border-color:#adb2b7;text-align:right;padding-right:3px;"></div>
<div class="c b cat" style="left:1147px;top:621px;width:51px;height:25px;background:#d4d4d4;border-color:#adb2b7;text-align:right;padding-right:3px;"></div>
<div class="c b cat" style="left:1057px;top:621px;width:90px;height:25px;background:#d4d4d4;border-color:#adb2b7;text-align:right;padding-right:3px;"></div>
<div class="c b cat" style="left:955px;top:621px;width:102px;height:25px;background:#d4d4d4;border-color:#adb2b7;text-align:right;padding-right:3px;"></div>
<div class="c b cat" style="left:909px;top:621px;width:46px;height:25px;background:#d4d4d4;border-color:#adb2b7;text-align:right;padding-right:3px;"></div>
<div class="c b cat" style="left:856px;top:621px;width:53px;height:25px;background:#d4d4d4;border-color:#adb2b7;text-align:right;padding-right:3px;"></div>
<div class="c b cat" style="left:790px;top:621px;width:66px;height:25px;background:#d4d4d4;border-color:#adb2b7;text-align:right;padding-right:3px;"></div>
<div class="c b cat" style="left:698px;top:621px;width:92px;height:25px;background:#d4d4d4;border-color:#adb2b7;text-align:right;padding-right:3px;"></div>
<div class="c b cat" style="left:650px;top:621px;width:48px;height:25px;background:#d4d4d4;border-color:#adb2b7;text-align:right;padding-right:3px;"></div>
<div class="c b cat" style="left:597px;top:621px;width:53px;height:25px;background:#d4d4d4;border-color:#adb2b7;text-align:right;padding-right:3px;"></div>
<div class="c b cat" style="left:508px;top:621px;width:89px;height:25px;background:#d4d4d4;border-color:#adb2b7;text-align:right;padding-right:3px;"></div>
<div class="c b cat" style="left:407px;top:621px;width:101px;height:25px;background:#d4d4d4;border-color:#adb2b7;text-align:right;padding-right:3px;"></div>
<div class="c b cat" style="left:357px;top:621px;width:50px;height:25px;background:#d4d4d4;border-color:#adb2b7;text-align:right;padding-right:3px;"></div>
<div class="c b cat" style="left:304px;top:621px;width:53px;height:25px;background:#d4d4d4;border-color:#adb2b7;text-align:right;padding-right:3px;"></div>
<div class="c b cat" style="left:219px;top:621px;width:85px;height:25px;background:#d4d4d4;border-color:#adb2b7;text-align:right;padding-right:3px;"></div>
<div class="c b cat" style="left:119px;top:621px;width:100px;height:25px;background:#d4d4d4;border-color:#adb2b7;text-align:right;padding-right:3px;"></div>
<div class="c b cat" style="left:35px;top:621px;width:84px;height:25px;background:#d4d4d4;border-color:#adb2b7;text-align:right;padding-right:3px;"></div>
<div class="c b name" style="left:1771px;top:646px;width:113px;height:24px;background:#d3e4f6;border-color:#adb2b7;text-align:right;padding-right:3px;">شمش سرب</div>
<div class="c b" style="left:1729px;top:646px;width:42px;height:24px;background:#d3e4f6;border-color:#adb2b7;text-align:right;padding-right:3px;">تن</div>
<div class="c b n" style="left:1681px;top:646px;width:48px;height:24px;background:#d3e4f6;border-color:#adb2b7;"><i class="z"></i></div>
<div class="c b n" style="left:1629px;top:646px;width:52px;height:24px;background:#d3e4f6;border-color:#adb2b7;"><i class="z"></i></div>
<div class="c b n" style="left:1540px;top:646px;width:89px;height:24px;background:#fde2a0;border-color:#adb2b7;"><i class="z"></i></div>
<div class="c b n" style="left:1438px;top:646px;width:102px;height:24px;background:#d3e4f6;border-color:#adb2b7;"><i class="z"></i></div>
<div class="c b n" style="left:1391px;top:646px;width:47px;height:24px;background:#d3e4f6;border-color:#adb2b7;"><i class="z"></i></div>
<div class="c b n" style="left:1339px;top:646px;width:52px;height:24px;background:#d3e4f6;border-color:#adb2b7;"><i class="z"></i></div>
<div class="c b n" style="left:1247px;top:646px;width:92px;height:24px;background:#d3e4f6;border-color:#adb2b7;"><i class="z"></i></div>
<div class="c b n" style="left:1198px;top:646px;width:49px;height:24px;background:#fde2a0;border-color:#adb2b7;"><i class="z"></i></div>
<div class="c b n" style="left:1147px;top:646px;width:51px;height:24px;background:#fde2a0;border-color:#adb2b7;"><i class="z"></i></div>
<div class="c b n" style="left:1057px;top:646px;width:90px;height:24px;background:#fde2a0;border-color:#adb2b7;"><i class="z"></i></div>
<div class="c b n" style="left:955px;top:646px;width:102px;height:24px;background:#fde2a0;border-color:#adb2b7;"><i class="z"></i></div>
<div class="c b n" style="left:909px;top:646px;width:46px;height:24px;background:#d3e4f6;border-color:#adb2b7;"></div>
<div class="c b n" style="left:856px;top:646px;width:53px;height:24px;background:#d3e4f6;border-color:#adb2b7;"></div>
<div class="c b n" style="left:790px;top:646px;width:66px;height:24px;background:#fde2a0;border-color:#adb2b7;"><i class="z"></i></div>
<div class="c b n" style="left:698px;top:646px;width:92px;height:24px;background:#d3e4f6;border-color:#adb2b7;"><i class="z"></i></div>
<div class="c b n" style="left:650px;top:646px;width:48px;height:24px;background:#fde2a0;border-color:#adb2b7;"><i class="z"></i></div>
<div class="c b n" style="left:597px;top:646px;width:53px;height:24px;background:#fde2a0;border-color:#adb2b7;"><i class="z"></i></div>
<div class="c b n" style="left:508px;top:646px;width:89px;height:24px;background:#fde2a0;border-color:#adb2b7;"><i class="z"></i></div>
<div class="c b n" style="left:407px;top:646px;width:101px;height:24px;background:#fde2a0;border-color:#adb2b7;"><i class="z"></i></div>
<div class="c b n" style="left:357px;top:646px;width:50px;height:24px;background:#d3e4f6;border-color:#adb2b7;"><i class="z"></i></div>
<div class="c b n" style="left:304px;top:646px;width:53px;height:24px;background:#d3e4f6;border-color:#adb2b7;"><i class="z"></i></div>
<div class="c b n" style="left:219px;top:646px;width:85px;height:24px;background:#fde2a0;border-color:#adb2b7;"><i class="z"></i></div>
<div class="c b n" style="left:119px;top:646px;width:100px;height:24px;background:#d3e4f6;border-color:#adb2b7;"><i class="z"></i></div>
<div class="c b" style="left:35px;top:646px;width:84px;height:24px;background:#d3e4f6;border-color:#adb2b7;text-align:right;padding-right:3px;">تولید</div>
<div class="c b name" style="left:1771px;top:670px;width:113px;height:24px;background:#efefef;border-color:#adb2b7;text-align:right;padding-right:3px;">شمش روي</div>
<div class="c b" style="left:1729px;top:670px;width:42px;height:24px;background:#efefef;border-color:#adb2b7;text-align:right;padding-right:3px;">تن</div>
<div class="c b n" style="left:1681px;top:670px;width:48px;height:24px;background:#efefef;border-color:#adb2b7;"><i class="z"></i></div>
<div class="c b n" style="left:1629px;top:670px;width:52px;height:24px;background:#efefef;border-color:#adb2b7;">۵<i class="z"></i></div>
<div class="c b n" style="left:1540px;top:670px;width:89px;height:24px;background:#fde2a0;border-color:#adb2b7;">۱,۸۵۷,۶۴<i class="z"></i>,<i class="z"></i><i class="z"></i><i class="z"></i></div>
<div class="c b n" style="left:1438px;top:670px;width:102px;height:24px;background:#efefef;border-color:#adb2b7;">۹۲,۸۸۲</div>
<div class="c b n" style="left:1391px;top:670px;width:47px;height:24px;background:#efefef;border-color:#adb2b7;"><i class="z"></i></div>
<div class="c b n" style="left:1339px;top:670px;width:52px;height:24px;background:#efefef;border-color:#adb2b7;"><i class="z"></i></div>
<div class="c b n" style="left:1247px;top:670px;width:92px;height:24px;background:#efefef;border-color:#adb2b7;"><i class="z"></i></div>
<div class="c b n" style="left:1198px;top:670px;width:49px;height:24px;background:#fde2a0;border-color:#adb2b7;"><i class="z"></i></div>
<div class="c b n" style="left:1147px;top:670px;width:51px;height:24px;background:#fde2a0;border-color:#adb2b7;">۵<i class="z"></i></div>
<div class="c b n" style="left:1057px;top:670px;width:90px;height:24px;background:#fde2a0;border-color:#adb2b7;">۱,۸۵۷,۶۴<i class="z"></i>,<i class="z"></i><i class="z"></i><i class="z"></i></div>
<div class="c b n" style="left:955px;top:670px;width:102px;height:24px;background:#fde2a0;border-color:#adb2b7;">۹۲,۸۸۲</div>
<div class="c b n" style="left:909px;top:670px;width:46px;height:24px;background:#efefef;border-color:#adb2b7;"></div>
<div class="c b n" style="left:856px;top:670px;width:53px;height:24px;background:#efefef;border-color:#adb2b7;"></div>
<div class="c b n" style="left:790px;top:670px;width:66px;height:24px;background:#fde2a0;border-color:#adb2b7;"><i class="z"></i></div>
<div class="c b n" style="left:698px;top:670px;width:92px;height:24px;background:#efefef;border-color:#adb2b7;"><i class="z"></i></div>
<div class="c b n" style="left:650px;top:670px;width:48px;height:24px;background:#fde2a0;border-color:#adb2b7;"><i class="z"></i></div>
<div class="c b n" style="left:597px;top:670px;width:53px;height:24px;background:#fde2a0;border-color:#adb2b7;">۵<i class="z"></i></div>
<div class="c b n" style="left:508px;top:670px;width:89px;height:24px;background:#fde2a0;border-color:#adb2b7;">۱,۸۵۷,۶۴<i class="z"></i>,<i class="z"></i><i class="z"></i><i class="z"></i></div>
<div class="c b n" style="left:407px;top:670px;width:101px;height:24px;background:#fde2a0;border-color:#adb2b7;">۹۲,۸۸۲</div>
<div class="c b n" style="left:357px;top:670px;width:50px;height:24px;background:#efefef;border-color:#adb2b7;"><i class="z"></i></div>
<div class="c b n" style="left:304px;top:670px;width:53px;height:24px;background:#efefef;border-color:#adb2b7;">۱۹۷</div>
<div class="c b n" style="left:219px;top:670px;width:85px;height:24px;background:#fde2a0;border-color:#adb2b7;">۸۲۶,۱۶۷,۵۱۳</div>
<div class="c b n" style="left:119px;top:670px;width:100px;height:24px;background:#efefef;border-color:#adb2b7;">۱۶۲,۷۵۵</div>
<div class="c b" style="left:35px;top:670px;width:84px;height:24px;background:#efefef;border-color:#adb2b7;text-align:right;padding-right:3px;">تولید</div>
<div class="c b name" style="left:1771px;top:694px;width:113px;height:24px;background:#fde2a0;border-color:#adb2b7;text-align:right;padding-right:3px;">جمع فروش صادراتی</div>
<div class="c b" style="left:1729px;top:694px;width:42px;height:24px;background:#fde2a0;border-color:#adb2b7;"></div>
<div class="c b n" style="left:1681px;top:694px;width:48px;height:24px;background:#fde2a0;border-color:#adb2b7;"><i class="z"></i></div>
<div class="c b n" style="left:1629px;top:694px;width:52px;height:24px;background:#fde2a0;border-color:#adb2b7;">۵<i class="z"></i></div>
<div class="c b n" style="left:1540px;top:694px;width:89px;height:24px;background:#fde2a0;border-color:#adb2b7;"></div>
<div class="c b n" style="left:1438px;top:694px;width:102px;height:24px;background:#fde2a0;border-color:#adb2b7;">۹۲,۸۸۲</div>
<div class="c b n" style="left:1391px;top:694px;width:47px;height:24px;background:#fde2a0;border-color:#adb2b7;"><i class="z"></i></div>
<div class="c b n" style="left:1339px;top:694px;width:52px;height:24px;background:#fde2a0;border-color:#adb2b7;"><i class="z"></i></div>
<div class="c b n" style="left:1247px;top:694px;width:92px;height:24px;background:#fde2a0;border-color:#adb2b7;"><i class="z"></i></div>
<div class="c b n" style="left:1198px;top:694px;width:49px;height:24px;background:#fde2a0;border-color:#adb2b7;"><i class="z"></i></div>
<div class="c b n" style="left:1147px;top:694px;width:51px;height:24px;background:#fde2a0;border-color:#adb2b7;">۵<i class="z"></i></div>
<div class="c b n" style="left:1057px;top:694px;width:90px;height:24px;background:#fde2a0;border-color:#adb2b7;"></div>
<div class="c b n" style="left:955px;top:694px;width:102px;height:24px;background:#fde2a0;border-color:#adb2b7;">۹۲,۸۸۲</div>
<div class="c b n" style="left:909px;top:694px;width:46px;height:24px;background:#fde2a0;border-color:#adb2b7;"><i class="z"></i></div>
<div class="c b n" style="left:856px;top:694px;width:53px;height:24px;background:#fde2a0;border-color:#adb2b7;"><i class="z"></i></div>
<div class="c b n" style="left:790px;top:694px;width:66px;height:24px;background:#fde2a0;border-color:#adb2b7;"></div>
<div class="c b n" style="left:698px;top:694px;width:92px;height:24px;background:#fde2a0;border-color:#adb2b7;"><i class="z"></i></div>
<div class="c b n" style="left:650px;top:694px;width:48px;height:24px;background:#fde2a0;border-color:#adb2b7;"><i class="z"></i></div>
<div class="c b n" style="left:597px;top:694px;width:53px;height:24px;background:#fde2a0;border-color:#adb2b7;">۵<i class="z"></i></div>
<div class="c b n" style="left:508px;top:694px;width:89px;height:24px;background:#fde2a0;border-color:#adb2b7;"></div>
<div class="c b n" style="left:407px;top:694px;width:101px;height:24px;background:#fde2a0;border-color:#adb2b7;">۹۲,۸۸۲</div>
<div class="c b n" style="left:357px;top:694px;width:50px;height:24px;background:#fde2a0;border-color:#adb2b7;"><i class="z"></i></div>
<div class="c b n" style="left:304px;top:694px;width:53px;height:24px;background:#fde2a0;border-color:#adb2b7;">۱۹۷</div>
<div class="c b n" style="left:219px;top:694px;width:85px;height:24px;background:#fde2a0;border-color:#adb2b7;"></div>
<div class="c b n" style="left:119px;top:694px;width:100px;height:24px;background:#fde2a0;border-color:#adb2b7;">۱۶۲,۷۵۵</div>
<div class="c b n" style="left:35px;top:694px;width:84px;height:24px;background:#fde2a0;border-color:#adb2b7;"></div>
<div class="c b cat" style="left:1771px;top:718px;width:113px;height:24px;background:#d4d4d4;border-color:#adb2b7;text-align:right;padding-right:3px;">درآمد ارائه خدمات:</div>
<div class="c b cat" style="left:1729px;top:718px;width:42px;height:24px;background:#d4d4d4;border-color:#adb2b7;text-align:right;padding-right:3px;"></div>
<div class="c b cat" style="left:1681px;top:718px;width:48px;height:24px;background:#d4d4d4;border-color:#adb2b7;text-align:right;padding-right:3px;"></div>
<div class="c b cat" style="left:1629px;top:718px;width:52px;height:24px;background:#d4d4d4;border-color:#adb2b7;text-align:right;padding-right:3px;"></div>
<div class="c b cat" style="left:1540px;top:718px;width:89px;height:24px;background:#d4d4d4;border-color:#adb2b7;text-align:right;padding-right:3px;"></div>
<div class="c b cat" style="left:1438px;top:718px;width:102px;height:24px;background:#d4d4d4;border-color:#adb2b7;text-align:right;padding-right:3px;"></div>
<div class="c b cat" style="left:1391px;top:718px;width:47px;height:24px;background:#d4d4d4;border-color:#adb2b7;text-align:right;padding-right:3px;"></div>
<div class="c b cat" style="left:1339px;top:718px;width:52px;height:24px;background:#d4d4d4;border-color:#adb2b7;text-align:right;padding-right:3px;"></div>
<div class="c b cat" style="left:1247px;top:718px;width:92px;height:24px;background:#d4d4d4;border-color:#adb2b7;text-align:right;padding-right:3px;"></div>
<div class="c b cat" style="left:1198px;top:718px;width:49px;height:24px;background:#d4d4d4;border-color:#adb2b7;text-align:right;padding-right:3px;"></div>
<div class="c b cat" style="left:1147px;top:718px;width:51px;height:24px;background:#d4d4d4;border-color:#adb2b7;text-align:right;padding-right:3px;"></div>
<div class="c b cat" style="left:1057px;top:718px;width:90px;height:24px;background:#d4d4d4;border-color:#adb2b7;text-align:right;padding-right:3px;"></div>
<div class="c b cat" style="left:955px;top:718px;width:102px;height:24px;background:#d4d4d4;border-color:#adb2b7;text-align:right;padding-right:3px;"></div>
<div class="c b cat" style="left:909px;top:718px;width:46px;height:24px;background:#d4d4d4;border-color:#adb2b7;text-align:right;padding-right:3px;"></div>
<div class="c b cat" style="left:856px;top:718px;width:53px;height:24px;background:#d4d4d4;border-color:#adb2b7;text-align:right;padding-right:3px;"></div>
<div class="c b cat" style="left:790px;top:718px;width:66px;height:24px;background:#d4d4d4;border-color:#adb2b7;text-align:right;padding-right:3px;"></div>
<div class="c b cat" style="left:698px;top:718px;width:92px;height:24px;background:#d4d4d4;border-color:#adb2b7;text-align:right;padding-right:3px;"></div>
<div class="c b cat" style="left:650px;top:718px;width:48px;height:24px;background:#d4d4d4;border-color:#adb2b7;text-align:right;padding-right:3px;"></div>
<div class="c b cat" style="left:597px;top:718px;width:53px;height:24px;background:#d4d4d4;border-color:#adb2b7;text-align:right;padding-right:3px;"></div>
<div class="c b cat" style="left:508px;top:718px;width:89px;height:24px;background:#d4d4d4;border-color:#adb2b7;text-align:right;padding-right:3px;"></div>
<div class="c b cat" style="left:407px;top:718px;width:101px;height:24px;background:#d4d4d4;border-color:#adb2b7;text-align:right;padding-right:3px;"></div>
<div class="c b cat" style="left:357px;top:718px;width:50px;height:24px;background:#d4d4d4;border-color:#adb2b7;text-align:right;padding-right:3px;"></div>
<div class="c b cat" style="left:304px;top:718px;width:53px;height:24px;background:#d4d4d4;border-color:#adb2b7;text-align:right;padding-right:3px;"></div>
<div class="c b cat" style="left:219px;top:718px;width:85px;height:24px;background:#d4d4d4;border-color:#adb2b7;text-align:right;padding-right:3px;"></div>
<div class="c b cat" style="left:119px;top:718px;width:100px;height:24px;background:#d4d4d4;border-color:#adb2b7;text-align:right;padding-right:3px;"></div>
<div class="c b cat" style="left:35px;top:718px;width:84px;height:24px;background:#d4d4d4;border-color:#adb2b7;text-align:right;padding-right:3px;"></div>
<div class="c b name top" style="left:1771px;top:742px;width:113px;height:41px;background:#fde2a0;border-color:#adb2b7;text-align:right;padding-right:3px;">جمع درآمد ارائه<br>خدمات</div>
<div class="c b" style="left:1729px;top:742px;width:42px;height:41px;background:#fde2a0;border-color:#adb2b7;"></div>
<div class="c b n top" style="left:1681px;top:742px;width:48px;height:41px;background:#fde2a0;border-color:#adb2b7;"><i class="z"></i></div>
<div class="c b n top" style="left:1629px;top:742px;width:52px;height:41px;background:#fde2a0;border-color:#adb2b7;"><i class="z"></i></div>
<div class="c b n top" style="left:1540px;top:742px;width:89px;height:41px;background:#fde2a0;border-color:#adb2b7;"></div>
<div class="c b n top" style="left:1438px;top:742px;width:102px;height:41px;background:#fde2a0;border-color:#adb2b7;"><i class="z"></i></div>
<div class="c b n top" style="left:1391px;top:742px;width:47px;height:41px;background:#fde2a0;border-color:#adb2b7;"><i class="z"></i></div>
<div class="c b n top" style="left:1339px;top:742px;width:52px;height:41px;background:#fde2a0;border-color:#adb2b7;"><i class="z"></i></div>
<div class="c b n top" style="left:1247px;top:742px;width:92px;height:41px;background:#fde2a0;border-color:#adb2b7;"><i class="z"></i></div>
<div class="c b n top" style="left:1198px;top:742px;width:49px;height:41px;background:#fde2a0;border-color:#adb2b7;"><i class="z"></i></div>
<div class="c b n top" style="left:1147px;top:742px;width:51px;height:41px;background:#fde2a0;border-color:#adb2b7;"><i class="z"></i></div>
<div class="c b n top" style="left:1057px;top:742px;width:90px;height:41px;background:#fde2a0;border-color:#adb2b7;"></div>
<div class="c b n top" style="left:955px;top:742px;width:102px;height:41px;background:#fde2a0;border-color:#adb2b7;"><i class="z"></i></div>
<div class="c b n top" style="left:909px;top:742px;width:46px;height:41px;background:#fde2a0;border-color:#adb2b7;"><i class="z"></i></div>
<div class="c b n top" style="left:856px;top:742px;width:53px;height:41px;background:#fde2a0;border-color:#adb2b7;"><i class="z"></i></div>
<div class="c b n top" style="left:790px;top:742px;width:66px;height:41px;background:#fde2a0;border-color:#adb2b7;"></div>
<div class="c b n top" style="left:698px;top:742px;width:92px;height:41px;background:#fde2a0;border-color:#adb2b7;"><i class="z"></i></div>
<div class="c b n top" style="left:650px;top:742px;width:48px;height:41px;background:#fde2a0;border-color:#adb2b7;"><i class="z"></i></div>
<div class="c b n top" style="left:597px;top:742px;width:53px;height:41px;background:#fde2a0;border-color:#adb2b7;"><i class="z"></i></div>
<div class="c b n top" style="left:508px;top:742px;width:89px;height:41px;background:#fde2a0;border-color:#adb2b7;"></div>
<div class="c b n top" style="left:407px;top:742px;width:101px;height:41px;background:#fde2a0;border-color:#adb2b7;"><i class="z"></i></div>
<div class="c b n top" style="left:357px;top:742px;width:50px;height:41px;background:#fde2a0;border-color:#adb2b7;"><i class="z"></i></div>
<div class="c b n top" style="left:304px;top:742px;width:53px;height:41px;background:#fde2a0;border-color:#adb2b7;"><i class="z"></i></div>
<div class="c b n top" style="left:219px;top:742px;width:85px;height:41px;background:#fde2a0;border-color:#adb2b7;"></div>
<div class="c b n top" style="left:119px;top:742px;width:100px;height:41px;background:#fde2a0;border-color:#adb2b7;"><i class="z"></i></div>
<div class="c b n top" style="left:35px;top:742px;width:84px;height:41px;background:#fde2a0;border-color:#adb2b7;"></div>
<div class="c b cat" style="left:1771px;top:783px;width:113px;height:24px;background:#d4d4d4;border-color:#adb2b7;text-align:right;padding-right:3px;">برگشت از فروش:</div>
<div class="c b cat" style="left:1729px;top:783px;width:42px;height:24px;background:#d4d4d4;border-color:#adb2b7;text-align:right;padding-right:3px;"></div>
<div class="c b cat" style="left:1681px;top:783px;width:48px;height:24px;background:#d4d4d4;border-color:#adb2b7;text-align:right;padding-right:3px;"></div>
<div class="c b cat" style="left:1629px;top:783px;width:52px;height:24px;background:#d4d4d4;border-color:#adb2b7;text-align:right;padding-right:3px;"></div>
<div class="c b cat" style="left:1540px;top:783px;width:89px;height:24px;background:#d4d4d4;border-color:#adb2b7;text-align:right;padding-right:3px;"></div>
<div class="c b cat" style="left:1438px;top:783px;width:102px;height:24px;background:#d4d4d4;border-color:#adb2b7;text-align:right;padding-right:3px;"></div>
<div class="c b cat" style="left:1391px;top:783px;width:47px;height:24px;background:#d4d4d4;border-color:#adb2b7;text-align:right;padding-right:3px;"></div>
<div class="c b cat" style="left:1339px;top:783px;width:52px;height:24px;background:#d4d4d4;border-color:#adb2b7;text-align:right;padding-right:3px;"></div>
<div class="c b cat" style="left:1247px;top:783px;width:92px;height:24px;background:#d4d4d4;border-color:#adb2b7;text-align:right;padding-right:3px;"></div>
<div class="c b cat" style="left:1198px;top:783px;width:49px;height:24px;background:#d4d4d4;border-color:#adb2b7;text-align:right;padding-right:3px;"></div>
<div class="c b cat" style="left:1147px;top:783px;width:51px;height:24px;background:#d4d4d4;border-color:#adb2b7;text-align:right;padding-right:3px;"></div>
<div class="c b cat" style="left:1057px;top:783px;width:90px;height:24px;background:#d4d4d4;border-color:#adb2b7;text-align:right;padding-right:3px;"></div>
<div class="c b cat" style="left:955px;top:783px;width:102px;height:24px;background:#d4d4d4;border-color:#adb2b7;text-align:right;padding-right:3px;"></div>
<div class="c b cat" style="left:909px;top:783px;width:46px;height:24px;background:#d4d4d4;border-color:#adb2b7;text-align:right;padding-right:3px;"></div>
<div class="c b cat" style="left:856px;top:783px;width:53px;height:24px;background:#d4d4d4;border-color:#adb2b7;text-align:right;padding-right:3px;"></div>
<div class="c b cat" style="left:790px;top:783px;width:66px;height:24px;background:#d4d4d4;border-color:#adb2b7;text-align:right;padding-right:3px;"></div>
<div class="c b cat" style="left:698px;top:783px;width:92px;height:24px;background:#d4d4d4;border-color:#adb2b7;text-align:right;padding-right:3px;"></div>
<div class="c b cat" style="left:650px;top:783px;width:48px;height:24px;background:#d4d4d4;border-color:#adb2b7;text-align:right;padding-right:3px;"></div>
<div class="c b cat" style="left:597px;top:783px;width:53px;height:24px;background:#d4d4d4;border-color:#adb2b7;text-align:right;padding-right:3px;"></div>
<div class="c b cat" style="left:508px;top:783px;width:89px;height:24px;background:#d4d4d4;border-color:#adb2b7;text-align:right;padding-right:3px;"></div>
<div class="c b cat" style="left:407px;top:783px;width:101px;height:24px;background:#d4d4d4;border-color:#adb2b7;text-align:right;padding-right:3px;"></div>
<div class="c b cat" style="left:357px;top:783px;width:50px;height:24px;background:#d4d4d4;border-color:#adb2b7;text-align:right;padding-right:3px;"></div>
<div class="c b cat" style="left:304px;top:783px;width:53px;height:24px;background:#d4d4d4;border-color:#adb2b7;text-align:right;padding-right:3px;"></div>
<div class="c b cat" style="left:219px;top:783px;width:85px;height:24px;background:#d4d4d4;border-color:#adb2b7;text-align:right;padding-right:3px;"></div>
<div class="c b cat" style="left:119px;top:783px;width:100px;height:24px;background:#d4d4d4;border-color:#adb2b7;text-align:right;padding-right:3px;"></div>
<div class="c b cat" style="left:35px;top:783px;width:84px;height:24px;background:#d4d4d4;border-color:#adb2b7;text-align:right;padding-right:3px;"></div>
<div class="c b name" style="left:1771px;top:807px;width:113px;height:25px;background:#fde2a0;border-color:#adb2b7;text-align:right;padding-right:3px;">جمع برگشت از فروش</div>
<div class="c b" style="left:1729px;top:807px;width:42px;height:25px;background:#fde2a0;border-color:#adb2b7;"></div>
<div class="c b n" style="left:1681px;top:807px;width:48px;height:25px;background:#fde2a0;border-color:#adb2b7;"></div>
<div class="c b n" style="left:1629px;top:807px;width:52px;height:25px;background:#fde2a0;border-color:#adb2b7;"><i class="z"></i></div>
<div class="c b n" style="left:1540px;top:807px;width:89px;height:25px;background:#fde2a0;border-color:#adb2b7;"></div>
<div class="c b n" style="left:1438px;top:807px;width:102px;height:25px;background:#fde2a0;border-color:#adb2b7;"><i class="z"></i></div>
<div class="c b n" style="left:1391px;top:807px;width:47px;height:25px;background:#fde2a0;border-color:#adb2b7;"></div>
<div class="c b n" style="left:1339px;top:807px;width:52px;height:25px;background:#fde2a0;border-color:#adb2b7;"><i class="z"></i></div>
<div class="c b n" style="left:1247px;top:807px;width:92px;height:25px;background:#fde2a0;border-color:#adb2b7;"><i class="z"></i></div>
<div class="c b n" style="left:1198px;top:807px;width:49px;height:25px;background:#fde2a0;border-color:#adb2b7;"></div>
<div class="c b n" style="left:1147px;top:807px;width:51px;height:25px;background:#fde2a0;border-color:#adb2b7;"><i class="z"></i></div>
<div class="c b n" style="left:1057px;top:807px;width:90px;height:25px;background:#fde2a0;border-color:#adb2b7;"></div>
<div class="c b n" style="left:955px;top:807px;width:102px;height:25px;background:#fde2a0;border-color:#adb2b7;"><i class="z"></i></div>
<div class="c b n" style="left:909px;top:807px;width:46px;height:25px;background:#fde2a0;border-color:#adb2b7;"></div>
<div class="c b n" style="left:856px;top:807px;width:53px;height:25px;background:#fde2a0;border-color:#adb2b7;"><i class="z"></i></div>
<div class="c b n" style="left:790px;top:807px;width:66px;height:25px;background:#fde2a0;border-color:#adb2b7;"></div>
<div class="c b n" style="left:698px;top:807px;width:92px;height:25px;background:#fde2a0;border-color:#adb2b7;"><i class="z"></i></div>
<div class="c b n" style="left:650px;top:807px;width:48px;height:25px;background:#fde2a0;border-color:#adb2b7;"></div>
<div class="c b n" style="left:597px;top:807px;width:53px;height:25px;background:#fde2a0;border-color:#adb2b7;"><i class="z"></i></div>
<div class="c b n" style="left:508px;top:807px;width:89px;height:25px;background:#fde2a0;border-color:#adb2b7;"></div>
<div class="c b n" style="left:407px;top:807px;width:101px;height:25px;background:#fde2a0;border-color:#adb2b7;"><i class="z"></i></div>
<div class="c b n" style="left:357px;top:807px;width:50px;height:25px;background:#fde2a0;border-color:#adb2b7;"></div>
<div class="c b n" style="left:304px;top:807px;width:53px;height:25px;background:#fde2a0;border-color:#adb2b7;"><i class="z"></i></div>
<div class="c b n" style="left:219px;top:807px;width:85px;height:25px;background:#fde2a0;border-color:#adb2b7;"></div>
<div class="c b n" style="left:119px;top:807px;width:100px;height:25px;background:#fde2a0;border-color:#adb2b7;"><i class="z"></i></div>
<div class="c b n" style="left:35px;top:807px;width:84px;height:25px;background:#fde2a0;border-color:#adb2b7;"></div>
<div class="c b name" style="left:1771px;top:832px;width:113px;height:24px;background:#d3e4f6;border-color:#adb2b7;text-align:right;padding-right:3px;">تخفیفات</div>
<div class="c b" style="left:1729px;top:832px;width:42px;height:24px;background:#d3e4f6;border-color:#adb2b7;"></div>
<div class="c b" style="left:1681px;top:832px;width:48px;height:24px;background:#d4d4d4;border-color:#adb2b7;"></div>
<div class="c b" style="left:1629px;top:832px;width:52px;height:24px;background:#d4d4d4;border-color:#adb2b7;"></div>
<div class="c b" style="left:1540px;top:832px;width:89px;height:24px;background:#d4d4d4;border-color:#adb2b7;"></div>
<div class="c b n" style="left:1438px;top:832px;width:102px;height:24px;background:#d3e4f6;border-color:#adb2b7;"><i class="z"></i></div>
<div class="c b" style="left:1391px;top:832px;width:47px;height:24px;background:#d4d4d4;border-color:#adb2b7;"></div>
<div class="c b" style="left:1339px;top:832px;width:52px;height:24px;background:#d4d4d4;border-color:#adb2b7;"></div>
<div class="c b n" style="left:1247px;top:832px;width:92px;height:24px;background:#d3e4f6;border-color:#adb2b7;"><i class="z"></i></div>
<div class="c b" style="left:1198px;top:832px;width:49px;height:24px;background:#d4d4d4;border-color:#adb2b7;"></div>
<div class="c b" style="left:1147px;top:832px;width:51px;height:24px;background:#d4d4d4;border-color:#adb2b7;"></div>
<div class="c b" style="left:1057px;top:832px;width:90px;height:24px;background:#d4d4d4;border-color:#adb2b7;"></div>
<div class="c b n" style="left:955px;top:832px;width:102px;height:24px;background:#d3e4f6;border-color:#adb2b7;"><i class="z"></i></div>
<div class="c b" style="left:909px;top:832px;width:46px;height:24px;background:#d4d4d4;border-color:#adb2b7;"></div>
<div class="c b" style="left:856px;top:832px;width:53px;height:24px;background:#d4d4d4;border-color:#adb2b7;"></div>
<div class="c b" style="left:790px;top:832px;width:66px;height:24px;background:#d4d4d4;border-color:#adb2b7;"></div>
<div class="c b n" style="left:698px;top:832px;width:92px;height:24px;background:#d3e4f6;border-color:#adb2b7;"><i class="z"></i></div>
<div class="c b" style="left:650px;top:832px;width:48px;height:24px;background:#d4d4d4;border-color:#adb2b7;"></div>
<div class="c b" style="left:597px;top:832px;width:53px;height:24px;background:#d4d4d4;border-color:#adb2b7;"></div>
<div class="c b" style="left:508px;top:832px;width:89px;height:24px;background:#d4d4d4;border-color:#adb2b7;"></div>
<div class="c b n" style="left:407px;top:832px;width:101px;height:24px;background:#d3e4f6;border-color:#adb2b7;"><i class="z"></i></div>
<div class="c b" style="left:357px;top:832px;width:50px;height:24px;background:#d4d4d4;border-color:#adb2b7;"></div>
<div class="c b" style="left:304px;top:832px;width:53px;height:24px;background:#d4d4d4;border-color:#adb2b7;"></div>
<div class="c b" style="left:219px;top:832px;width:85px;height:24px;background:#d4d4d4;border-color:#adb2b7;"></div>
<div class="c b n" style="left:119px;top:832px;width:100px;height:24px;background:#d3e4f6;border-color:#adb2b7;"><i class="z"></i></div>
<div class="c b n" style="left:35px;top:832px;width:84px;height:24px;background:#d3e4f6;border-color:#adb2b7;"></div>
<div class="c b name" style="left:1771px;top:856px;width:113px;height:24px;background:#fde2a0;border-color:#adb2b7;text-align:right;padding-right:3px;">جمع</div>
<div class="c b" style="left:1729px;top:856px;width:42px;height:24px;background:#fde2a0;border-color:#adb2b7;"></div>
<div class="c b n" style="left:1681px;top:856px;width:48px;height:24px;background:#fde2a0;border-color:#adb2b7;"></div>
<div class="c b n" style="left:1629px;top:856px;width:52px;height:24px;background:#fde2a0;border-color:#adb2b7;"></div>
<div class="c b n" style="left:1540px;top:856px;width:89px;height:24px;background:#fde2a0;border-color:#adb2b7;"></div>
<div class="c b n" style="left:1438px;top:856px;width:102px;height:24px;background:#fde2a0;border-color:#adb2b7;">۳,۶۵۱,۳۷۱</div>
<div class="c b n" style="left:1391px;top:856px;width:47px;height:24px;background:#fde2a0;border-color:#adb2b7;"></div>
<div class="c b n" style="left:1339px;top:856px;width:52px;height:24px;background:#fde2a0;border-color:#adb2b7;"></div>
<div class="c b n" style="left:1247px;top:856px;width:92px;height:24px;background:#fde2a0;border-color:#adb2b7;"><i class="z"></i></div>
<div class="c b n" style="left:1198px;top:856px;width:49px;height:24px;background:#fde2a0;border-color:#adb2b7;"></div>
<div class="c b n" style="left:1147px;top:856px;width:51px;height:24px;background:#fde2a0;border-color:#adb2b7;"></div>
<div class="c b n" style="left:1057px;top:856px;width:90px;height:24px;background:#fde2a0;border-color:#adb2b7;"></div>
<div class="c b n" style="left:955px;top:856px;width:102px;height:24px;background:#fde2a0;border-color:#adb2b7;">۳,۶۵۱,۳۷۱</div>
<div class="c b n" style="left:909px;top:856px;width:46px;height:24px;background:#fde2a0;border-color:#adb2b7;"></div>
<div class="c b n" style="left:856px;top:856px;width:53px;height:24px;background:#fde2a0;border-color:#adb2b7;"></div>
<div class="c b n" style="left:790px;top:856px;width:66px;height:24px;background:#fde2a0;border-color:#adb2b7;"></div>
<div class="c b n" style="left:698px;top:856px;width:92px;height:24px;background:#fde2a0;border-color:#adb2b7;"><i class="z"></i></div>
<div class="c b n" style="left:650px;top:856px;width:48px;height:24px;background:#fde2a0;border-color:#adb2b7;"></div>
<div class="c b n" style="left:597px;top:856px;width:53px;height:24px;background:#fde2a0;border-color:#adb2b7;"></div>
<div class="c b n" style="left:508px;top:856px;width:89px;height:24px;background:#fde2a0;border-color:#adb2b7;"></div>
<div class="c b n" style="left:407px;top:856px;width:101px;height:24px;background:#fde2a0;border-color:#adb2b7;">۳,۶۵۱,۳۷۱</div>
<div class="c b n" style="left:357px;top:856px;width:50px;height:24px;background:#fde2a0;border-color:#adb2b7;"></div>
<div class="c b n" style="left:304px;top:856px;width:53px;height:24px;background:#fde2a0;border-color:#adb2b7;"></div>
<div class="c b n" style="left:219px;top:856px;width:85px;height:24px;background:#fde2a0;border-color:#adb2b7;"></div>
<div class="c b n" style="left:119px;top:856px;width:100px;height:24px;background:#fde2a0;border-color:#adb2b7;">۱,۵۲۲,۵۴۴</div>
<div class="c b n" style="left:35px;top:856px;width:84px;height:24px;background:#fde2a0;border-color:#adb2b7;"></div>
<div id="t1r" class="abs"></div>

<div class="sec abs" style="top:891px">خرید مواد اولیه</div>
<div class="c h top" style="left:1753px;top:924px;width:131px;height:47px;background:#0597c9;border-color:#a9dcef;">شرح</div>
<div class="c h top" style="left:1722px;top:924px;width:31px;height:47px;background:#0597c9;border-color:#a9dcef;">واحد</div>
<div class="c h" style="left:1491px;top:924px;width:231px;height:23px;background:#0597c9;border-color:#a9dcef;">از ابتدای سال مالی تا تاریخ <span class="dt">۱۴<i class="z zh"></i>۴/<i class="z zh"></i>۶/۳۱</span></div>
<div class="c h" style="left:1679px;top:947px;width:43px;height:24px;background:#0597c9;border-color:#a9dcef;">مقدار</div>
<div class="c h" style="left:1602px;top:947px;width:77px;height:24px;background:#0597c9;border-color:#a9dcef;">نرخ (ریال)</div>
<div class="c h" style="left:1491px;top:947px;width:111px;height:24px;background:#0597c9;border-color:#a9dcef;">مبلغ (میلیون ریال)</div>
<div class="c h" style="left:1229px;top:924px;width:262px;height:23px;background:#0597c9;border-color:#a9dcef;">اصلاحات</div>
<div class="c h" style="left:1447px;top:947px;width:44px;height:24px;background:#0597c9;border-color:#a9dcef;">مقدار</div>
<div class="c h" style="left:1343px;top:947px;width:104px;height:24px;background:#0597c9;border-color:#a9dcef;">نرخ (ریال)</div>
<div class="c h" style="left:1229px;top:947px;width:114px;height:24px;background:#0597c9;border-color:#a9dcef;">مبلغ ( میلیون ریال)</div>
<div class="c h" style="left:930px;top:924px;width:299px;height:23px;background:#0597c9;border-color:#a9dcef;">ازابتدای سال مالی تا تاریخ <span class="dt">۱۴<i class="z zh"></i>۴/<i class="z zh"></i>۶/۳۱</span> (اصلاح شده)</div>
<div class="c h" style="left:1176px;top:947px;width:53px;height:24px;background:#0597c9;border-color:#a9dcef;">مقدار</div>
<div class="c h" style="left:1064px;top:947px;width:112px;height:24px;background:#0597c9;border-color:#a9dcef;">نرخ (ریال)</div>
<div class="c h" style="left:930px;top:947px;width:134px;height:24px;background:#0597c9;border-color:#a9dcef;">مبلغ (میلیون ریال)</div>
<div class="c h" style="left:686px;top:924px;width:244px;height:23px;background:#0597c9;border-color:#a9dcef;">خرید دوره یک ماهه منتهی به <span class="dt">۱۴<i class="z zh"></i>۴/<i class="z zh"></i>۷/۳<i class="z zh"></i></span></div>
<div class="c h" style="left:888px;top:947px;width:42px;height:24px;background:#0597c9;border-color:#a9dcef;">مقدار</div>
<div class="c h" style="left:814px;top:947px;width:74px;height:24px;background:#0597c9;border-color:#a9dcef;">نرخ (ریال)</div>
<div class="c h" style="left:686px;top:947px;width:128px;height:24px;background:#0597c9;border-color:#a9dcef;">مبلغ (میلیون ریال)</div>
<div class="c h" style="left:268px;top:924px;width:418px;height:23px;background:#0597c9;border-color:#a9dcef;">مواد اولیه خریداری شده از ابتدای دوره تا پایان دوره منتهی به <span class="dt">۱۴<i class="z zh"></i>۴/<i class="z zh"></i>۷/۳<i class="z zh"></i></span></div>
<div class="c h" style="left:612px;top:947px;width:74px;height:24px;background:#0597c9;border-color:#a9dcef;">مقدار</div>
<div class="c h" style="left:455px;top:947px;width:157px;height:24px;background:#0597c9;border-color:#a9dcef;">نرخ (ریال)</div>
<div class="c h" style="left:268px;top:947px;width:187px;height:24px;background:#0597c9;border-color:#a9dcef;">مبلغ (میلیون ریال)</div>
<div class="c h" style="left:35px;top:924px;width:233px;height:23px;background:#0597c9;border-color:#a9dcef;">از ابتدای سال مالی تا تاریخ <span class="dt">۱۴<i class="z zh"></i>۳/<i class="z zh"></i>۷/۳<i class="z zh"></i></span></div>
<div class="c h" style="left:228px;top:947px;width:40px;height:24px;background:#0597c9;border-color:#a9dcef;">مقدار</div>
<div class="c h" style="left:158px;top:947px;width:70px;height:24px;background:#0597c9;border-color:#a9dcef;">نرخ (ریال)</div>
<div class="c h" style="left:35px;top:947px;width:123px;height:24px;background:#0597c9;border-color:#a9dcef;">مبلغ (میلیون ریال)</div>
<div class="c b cat" style="left:1753px;top:971px;width:131px;height:24px;background:#d4d4d4;border-color:#adb2b7;text-align:right;padding-right:3px;">مواد اولیه داخلی</div>
<div class="c b cat" style="left:1722px;top:971px;width:31px;height:24px;background:#d4d4d4;border-color:#adb2b7;text-align:right;padding-right:3px;"></div>
<div class="c b cat" style="left:1679px;top:971px;width:43px;height:24px;background:#d4d4d4;border-color:#adb2b7;text-align:right;padding-right:3px;"></div>
<div class="c b cat" style="left:1602px;top:971px;width:77px;height:24px;background:#d4d4d4;border-color:#adb2b7;text-align:right;padding-right:3px;"></div>
<div class="c b cat" style="left:1491px;top:971px;width:111px;height:24px;background:#d4d4d4;border-color:#adb2b7;text-align:right;padding-right:3px;"></div>
<div class="c b cat" style="left:1447px;top:971px;width:44px;height:24px;background:#d4d4d4;border-color:#adb2b7;text-align:right;padding-right:3px;"></div>
<div class="c b cat" style="left:1343px;top:971px;width:104px;height:24px;background:#d4d4d4;border-color:#adb2b7;text-align:right;padding-right:3px;"></div>
<div class="c b cat" style="left:1229px;top:971px;width:114px;height:24px;background:#d4d4d4;border-color:#adb2b7;text-align:right;padding-right:3px;"></div>
<div class="c b cat" style="left:1176px;top:971px;width:53px;height:24px;background:#d4d4d4;border-color:#adb2b7;text-align:right;padding-right:3px;"></div>
<div class="c b cat" style="left:1064px;top:971px;width:112px;height:24px;background:#d4d4d4;border-color:#adb2b7;text-align:right;padding-right:3px;"></div>
<div class="c b cat" style="left:930px;top:971px;width:134px;height:24px;background:#d4d4d4;border-color:#adb2b7;text-align:right;padding-right:3px;"></div>
<div class="c b cat" style="left:888px;top:971px;width:42px;height:24px;background:#d4d4d4;border-color:#adb2b7;text-align:right;padding-right:3px;"></div>
<div class="c b cat" style="left:814px;top:971px;width:74px;height:24px;background:#d4d4d4;border-color:#adb2b7;text-align:right;padding-right:3px;"></div>
<div class="c b cat" style="left:686px;top:971px;width:128px;height:24px;background:#d4d4d4;border-color:#adb2b7;text-align:right;padding-right:3px;"></div>
<div class="c b cat" style="left:612px;top:971px;width:74px;height:24px;background:#d4d4d4;border-color:#adb2b7;text-align:right;padding-right:3px;"></div>
<div class="c b cat" style="left:455px;top:971px;width:157px;height:24px;background:#d4d4d4;border-color:#adb2b7;text-align:right;padding-right:3px;"></div>
<div class="c b cat" style="left:268px;top:971px;width:187px;height:24px;background:#d4d4d4;border-color:#adb2b7;text-align:right;padding-right:3px;"></div>
<div class="c b cat" style="left:228px;top:971px;width:40px;height:24px;background:#d4d4d4;border-color:#adb2b7;text-align:right;padding-right:3px;"></div>
<div class="c b cat" style="left:158px;top:971px;width:70px;height:24px;background:#d4d4d4;border-color:#adb2b7;text-align:right;padding-right:3px;"></div>
<div class="c b cat" style="left:35px;top:971px;width:123px;height:24px;background:#d4d4d4;border-color:#adb2b7;text-align:right;padding-right:3px;"></div>
<div class="c b name" style="left:1753px;top:995px;width:131px;height:25px;background:#d3e4f6;border-color:#adb2b7;text-align:right;padding-right:3px;">موادکمکي کارخانه روي</div>
<div class="c b" style="left:1722px;top:995px;width:31px;height:25px;background:#d3e4f6;border-color:#adb2b7;text-align:right;padding-right:3px;">تن</div>
<div class="c b n" style="left:1679px;top:995px;width:43px;height:25px;background:#d3e4f6;border-color:#adb2b7;">۸,۱۹۳</div>
<div class="c b n" style="left:1602px;top:995px;width:77px;height:25px;background:#fde2a0;border-color:#adb2b7;">۵۷,۲<i class="z"></i><i class="z"></i>,۷۸۱</div>
<div class="c b n" style="left:1491px;top:995px;width:111px;height:25px;background:#d3e4f6;border-color:#adb2b7;">۴۶۸,۶۴۶</div>
<div class="c b n" style="left:1447px;top:995px;width:44px;height:25px;background:#d3e4f6;border-color:#adb2b7;">۸۳۱</div>
<div class="c b n" style="left:1343px;top:995px;width:104px;height:25px;background:#fde2a0;border-color:#adb2b7;">۱۵۱,۷۳۶,۴۶۲.<i class="z"></i>۹</div>
<div class="c b n" style="left:1229px;top:995px;width:114px;height:25px;background:#d3e4f6;border-color:#adb2b7;">۱۲۶,<i class="z"></i>۹۳</div>
<div class="c b n" style="left:1176px;top:995px;width:53px;height:25px;background:#fde2a0;border-color:#adb2b7;">۹,<i class="z"></i>۲۴</div>
<div class="c b n" style="left:1064px;top:995px;width:112px;height:25px;background:#fde2a0;border-color:#adb2b7;">۶۵,۹<i class="z"></i>۶,۳۶۱</div>
<div class="c b n" style="left:930px;top:995px;width:134px;height:25px;background:#fde2a0;border-color:#adb2b7;">۵۹۴,۷۳۹</div>
<div class="c b n" style="left:888px;top:995px;width:42px;height:25px;background:#d3e4f6;border-color:#adb2b7;"><i class="z"></i></div>
<div class="c b n" style="left:814px;top:995px;width:74px;height:25px;background:#fde2a0;border-color:#adb2b7;"><i class="z"></i></div>
<div class="c b n" style="left:686px;top:995px;width:128px;height:25px;background:#d3e4f6;border-color:#adb2b7;"><i class="z"></i></div>
<div class="c b n" style="left:612px;top:995px;width:74px;height:25px;background:#fde2a0;border-color:#adb2b7;">۹,<i class="z"></i>۲۴</div>
<div class="c b n" style="left:455px;top:995px;width:157px;height:25px;background:#fde2a0;border-color:#adb2b7;">۶۵,۹<i class="z"></i>۶,۳۶۱</div>
<div class="c b n" style="left:268px;top:995px;width:187px;height:25px;background:#fde2a0;border-color:#adb2b7;">۵۹۴,۷۳۹</div>
<div class="c b n" style="left:228px;top:995px;width:40px;height:25px;background:#d3e4f6;border-color:#adb2b7;"><i class="z"></i></div>
<div class="c b n" style="left:158px;top:995px;width:70px;height:25px;background:#fde2a0;border-color:#adb2b7;"><i class="z"></i></div>
<div class="c b n" style="left:35px;top:995px;width:123px;height:25px;background:#d3e4f6;border-color:#adb2b7;"><i class="z"></i></div>
<div class="c b name" style="left:1753px;top:1020px;width:131px;height:24px;background:#efefef;border-color:#adb2b7;text-align:right;padding-right:3px;">مواد اولیه کارخانه روي</div>
<div class="c b" style="left:1722px;top:1020px;width:31px;height:24px;background:#efefef;border-color:#adb2b7;text-align:right;padding-right:3px;">تن</div>
<div class="c b n" style="left:1679px;top:1020px;width:43px;height:24px;background:#efefef;border-color:#adb2b7;"><i class="z"></i></div>
<div class="c b n" style="left:1602px;top:1020px;width:77px;height:24px;background:#fde2a0;border-color:#adb2b7;"><i class="z"></i></div>
<div class="c b n" style="left:1491px;top:1020px;width:111px;height:24px;background:#efefef;border-color:#adb2b7;"><i class="z"></i></div>
<div class="c b n" style="left:1447px;top:1020px;width:44px;height:24px;background:#efefef;border-color:#adb2b7;">۹,۹۳۲</div>
<div class="c b n" style="left:1343px;top:1020px;width:104px;height:24px;background:#fde2a0;border-color:#adb2b7;">۳۳۱,۳۵۸,۲۳۶</div>
<div class="c b n" style="left:1229px;top:1020px;width:114px;height:24px;background:#efefef;border-color:#adb2b7;">۳,۲۹۱,<i class="z"></i>۵<i class="z"></i></div>
<div class="c b n" style="left:1176px;top:1020px;width:53px;height:24px;background:#fde2a0;border-color:#adb2b7;">۹,۹۳۲</div>
<div class="c b n" style="left:1064px;top:1020px;width:112px;height:24px;background:#fde2a0;border-color:#adb2b7;">۳۳۱,۳۵۸,۲۳۶</div>
<div class="c b n" style="left:930px;top:1020px;width:134px;height:24px;background:#fde2a0;border-color:#adb2b7;">۳,۲۹۱,<i class="z"></i>۵<i class="z"></i></div>
<div class="c b n" style="left:888px;top:1020px;width:42px;height:24px;background:#efefef;border-color:#adb2b7;"><i class="z"></i></div>
<div class="c b n" style="left:814px;top:1020px;width:74px;height:24px;background:#fde2a0;border-color:#adb2b7;"><i class="z"></i></div>
<div class="c b n" style="left:686px;top:1020px;width:128px;height:24px;background:#efefef;border-color:#adb2b7;"><i class="z"></i></div>
<div class="c b n" style="left:612px;top:1020px;width:74px;height:24px;background:#fde2a0;border-color:#adb2b7;">۹,۹۳۲</div>
<div class="c b n" style="left:455px;top:1020px;width:157px;height:24px;background:#fde2a0;border-color:#adb2b7;">۳۳۱,۳۵۸,۲۳۶</div>
<div class="c b n" style="left:268px;top:1020px;width:187px;height:24px;background:#fde2a0;border-color:#adb2b7;">۳,۲۹۱,<i class="z"></i>۵<i class="z"></i></div>
<div class="c b n" style="left:228px;top:1020px;width:40px;height:24px;background:#efefef;border-color:#adb2b7;"><i class="z"></i></div>
<div class="c b n" style="left:158px;top:1020px;width:70px;height:24px;background:#fde2a0;border-color:#adb2b7;"><i class="z"></i></div>
<div class="c b n" style="left:35px;top:1020px;width:123px;height:24px;background:#efefef;border-color:#adb2b7;"><i class="z"></i></div>
<div class="c b name" style="left:1753px;top:1044px;width:131px;height:24px;background:#fde2a0;border-color:#adb2b7;text-align:right;padding-right:3px;">جمع مواد اولیه داخلی</div>
<div class="c b" style="left:1722px;top:1044px;width:31px;height:24px;background:#fde2a0;border-color:#adb2b7;"></div>
<div class="c b n" style="left:1679px;top:1044px;width:43px;height:24px;background:#fde2a0;border-color:#adb2b7;text-align:right;padding-right:3px;"><i class="z"></i></div>
<div class="c b n" style="left:1602px;top:1044px;width:77px;height:24px;background:#fde2a0;border-color:#adb2b7;text-align:right;padding-right:3px;"><i class="z"></i></div>
<div class="c b n" style="left:1491px;top:1044px;width:111px;height:24px;background:#fde2a0;border-color:#adb2b7;">۴۶۸,۶۴۶</div>
<div class="c b n" style="left:1447px;top:1044px;width:44px;height:24px;background:#fde2a0;border-color:#adb2b7;text-align:right;padding-right:3px;"><i class="z"></i></div>
<div class="c b n" style="left:1343px;top:1044px;width:104px;height:24px;background:#fde2a0;border-color:#adb2b7;text-align:right;padding-right:3px;"><i class="z"></i></div>
<div class="c b n" style="left:1229px;top:1044px;width:114px;height:24px;background:#fde2a0;border-color:#adb2b7;">۳,۴۱۷,۱۴۳</div>
<div class="c b n" style="left:1176px;top:1044px;width:53px;height:24px;background:#fde2a0;border-color:#adb2b7;text-align:right;padding-right:3px;"><i class="z"></i></div>
<div class="c b n" style="left:1064px;top:1044px;width:112px;height:24px;background:#fde2a0;border-color:#adb2b7;text-align:right;padding-right:3px;"><i class="z"></i></div>
<div class="c b n" style="left:930px;top:1044px;width:134px;height:24px;background:#fde2a0;border-color:#adb2b7;">۳,۸۸۵,۷۸۹</div>
<div class="c b n" style="left:888px;top:1044px;width:42px;height:24px;background:#fde2a0;border-color:#adb2b7;text-align:right;padding-right:3px;"><i class="z"></i></div>
<div class="c b n" style="left:814px;top:1044px;width:74px;height:24px;background:#fde2a0;border-color:#adb2b7;text-align:right;padding-right:3px;"><i class="z"></i></div>
<div class="c b n" style="left:686px;top:1044px;width:128px;height:24px;background:#fde2a0;border-color:#adb2b7;"><i class="z"></i></div>
<div class="c b n" style="left:612px;top:1044px;width:74px;height:24px;background:#fde2a0;border-color:#adb2b7;text-align:right;padding-right:3px;"><i class="z"></i></div>
<div class="c b n" style="left:455px;top:1044px;width:157px;height:24px;background:#fde2a0;border-color:#adb2b7;text-align:right;padding-right:3px;"><i class="z"></i></div>
<div class="c b n" style="left:268px;top:1044px;width:187px;height:24px;background:#fde2a0;border-color:#adb2b7;">۳,۸۸۵,۷۸۹</div>
<div class="c b n" style="left:228px;top:1044px;width:40px;height:24px;background:#fde2a0;border-color:#adb2b7;text-align:right;padding-right:3px;"><i class="z"></i></div>
<div class="c b n" style="left:158px;top:1044px;width:70px;height:24px;background:#fde2a0;border-color:#adb2b7;text-align:right;padding-right:3px;"><i class="z"></i></div>
<div class="c b n" style="left:35px;top:1044px;width:123px;height:24px;background:#fde2a0;border-color:#adb2b7;"><i class="z"></i></div>
<div class="c b cat" style="left:1753px;top:1068px;width:131px;height:24px;background:#d4d4d4;border-color:#adb2b7;text-align:right;padding-right:3px;">مواد اولیه وارداتی</div>
<div class="c b cat" style="left:1722px;top:1068px;width:31px;height:24px;background:#d4d4d4;border-color:#adb2b7;text-align:right;padding-right:3px;"></div>
<div class="c b cat" style="left:1679px;top:1068px;width:43px;height:24px;background:#d4d4d4;border-color:#adb2b7;text-align:right;padding-right:3px;"></div>
<div class="c b cat" style="left:1602px;top:1068px;width:77px;height:24px;background:#d4d4d4;border-color:#adb2b7;text-align:right;padding-right:3px;"></div>
<div class="c b cat" style="left:1491px;top:1068px;width:111px;height:24px;background:#d4d4d4;border-color:#adb2b7;text-align:right;padding-right:3px;"></div>
<div class="c b cat" style="left:1447px;top:1068px;width:44px;height:24px;background:#d4d4d4;border-color:#adb2b7;text-align:right;padding-right:3px;"></div>
<div class="c b cat" style="left:1343px;top:1068px;width:104px;height:24px;background:#d4d4d4;border-color:#adb2b7;text-align:right;padding-right:3px;"></div>
<div class="c b cat" style="left:1229px;top:1068px;width:114px;height:24px;background:#d4d4d4;border-color:#adb2b7;text-align:right;padding-right:3px;"></div>
<div class="c b cat" style="left:1176px;top:1068px;width:53px;height:24px;background:#d4d4d4;border-color:#adb2b7;text-align:right;padding-right:3px;"></div>
<div class="c b cat" style="left:1064px;top:1068px;width:112px;height:24px;background:#d4d4d4;border-color:#adb2b7;text-align:right;padding-right:3px;"></div>
<div class="c b cat" style="left:930px;top:1068px;width:134px;height:24px;background:#d4d4d4;border-color:#adb2b7;text-align:right;padding-right:3px;"></div>
<div class="c b cat" style="left:888px;top:1068px;width:42px;height:24px;background:#d4d4d4;border-color:#adb2b7;text-align:right;padding-right:3px;"></div>
<div class="c b cat" style="left:814px;top:1068px;width:74px;height:24px;background:#d4d4d4;border-color:#adb2b7;text-align:right;padding-right:3px;"></div>
<div class="c b cat" style="left:686px;top:1068px;width:128px;height:24px;background:#d4d4d4;border-color:#adb2b7;text-align:right;padding-right:3px;"></div>
<div class="c b cat" style="left:612px;top:1068px;width:74px;height:24px;background:#d4d4d4;border-color:#adb2b7;text-align:right;padding-right:3px;"></div>
<div class="c b cat" style="left:455px;top:1068px;width:157px;height:24px;background:#d4d4d4;border-color:#adb2b7;text-align:right;padding-right:3px;"></div>
<div class="c b cat" style="left:268px;top:1068px;width:187px;height:24px;background:#d4d4d4;border-color:#adb2b7;text-align:right;padding-right:3px;"></div>
<div class="c b cat" style="left:228px;top:1068px;width:40px;height:24px;background:#d4d4d4;border-color:#adb2b7;text-align:right;padding-right:3px;"></div>
<div class="c b cat" style="left:158px;top:1068px;width:70px;height:24px;background:#d4d4d4;border-color:#adb2b7;text-align:right;padding-right:3px;"></div>
<div class="c b cat" style="left:35px;top:1068px;width:123px;height:24px;background:#d4d4d4;border-color:#adb2b7;text-align:right;padding-right:3px;"></div>
<div id="t2r" class="abs"></div>

<div id="wm" class="abs">@Codal360.ir</div>
</body>
</html>
